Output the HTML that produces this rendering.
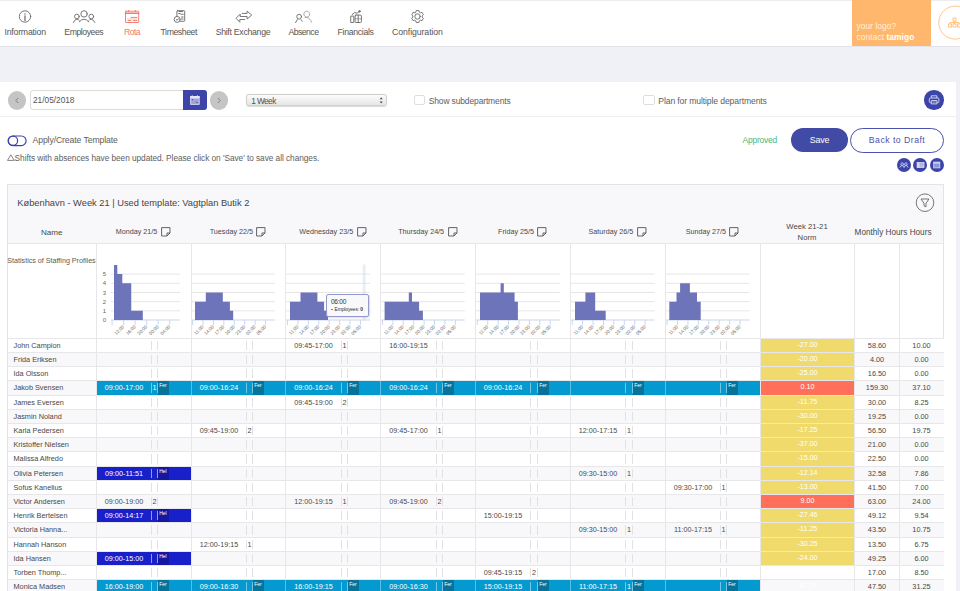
<!DOCTYPE html>
<html><head><meta charset="utf-8"><title>Rota</title>
<style>
html,body{margin:0;padding:0;}
body{width:960px;height:591px;overflow:hidden;position:relative;background:#f0f1f6;font-family:"Liberation Sans", sans-serif;}
.t{position:absolute;white-space:nowrap;font-family:"Liberation Sans", sans-serif;}
.b{position:absolute;box-sizing:border-box;}
svg{position:absolute;overflow:visible;}
</style></head><body>

<div class="b" style="left:0.00px;top:0.00px;width:960.00px;height:46.50px;background:#fff;border-top:1px solid #ececef;border-bottom:1px solid #e2e3e8;"></div>
<div class="t" style="left:-19.90px;top:27.74px;width:90px;text-align:center;font-size:8.7px;line-height:8.7px;color:#555555;letter-spacing:-0.192px;">Information</div>
<div class="t" style="left:38.77px;top:27.74px;width:90px;text-align:center;font-size:8.7px;line-height:8.7px;color:#555555;letter-spacing:-0.455px;">Employees</div>
<div class="t" style="left:87.00px;top:27.74px;width:90px;text-align:center;font-size:8.7px;line-height:8.7px;color:#f47a6a;letter-spacing:-0.592px;">Rota</div>
<div class="t" style="left:133.79px;top:27.74px;width:90px;text-align:center;font-size:8.7px;line-height:8.7px;color:#555555;letter-spacing:-0.424px;">Timesheet</div>
<div class="t" style="left:197.96px;top:27.74px;width:90px;text-align:center;font-size:8.7px;line-height:8.7px;color:#555555;letter-spacing:-0.271px;">Shift Exchange</div>
<div class="t" style="left:258.47px;top:27.74px;width:90px;text-align:center;font-size:8.7px;line-height:8.7px;color:#555555;letter-spacing:-0.560px;">Absence</div>
<div class="t" style="left:310.60px;top:27.74px;width:90px;text-align:center;font-size:8.7px;line-height:8.7px;color:#555555;letter-spacing:-0.296px;">Financials</div>
<div class="t" style="left:372.47px;top:27.74px;width:90px;text-align:center;font-size:8.7px;line-height:8.7px;color:#555555;letter-spacing:-0.063px;">Configuration</div>
<svg style="left:0;top:0" width="460" height="46" viewBox="0 0 460 46" fill="none" stroke="#707070" stroke-width="0.95" stroke-linejoin="round" stroke-linecap="round"><circle cx="25" cy="16.5" r="5.7"/><line x1="25" y1="16" x2="25" y2="20.5" stroke-width="1.3"/><circle cx="25" cy="14" r="0.75" fill="#707070" stroke="none"/><circle cx="84.07" cy="13.9" r="3.2"/><path d="M79.3 21.8 Q84 16.3 88.8 21.8"/><circle cx="76.9" cy="16.5" r="2.35"/><path d="M73.4 22.4 Q74.6 19.4 76.9 19.2 Q78.6 19.3 79.2 20.3"/><circle cx="91.3" cy="16.5" r="2.35"/><path d="M94.8 22.4 Q93.6 19.4 91.3 19.2 Q89.6 19.3 89 20.3"/><g stroke="#f47a6a"><rect x="125.5" y="11.2" width="13.2" height="11.3" rx="0.5"/><line x1="125.5" y1="13.3" x2="138.7" y2="13.3" stroke-width="1.6"/><line x1="128.6" y1="10.5" x2="128.6" y2="11.6"/><line x1="135.5" y1="10.5" x2="135.5" y2="11.6"/><line x1="131" y1="17.4" x2="137" y2="17.4"/><line x1="127.3" y1="19" x2="137" y2="19" stroke-width="0.5"/><line x1="128" y1="20.6" x2="131" y2="20.6"/><line x1="133.4" y1="20.6" x2="137" y2="20.6"/></g><rect x="176.9" y="10.7" width="7.8" height="10.6" rx="0.6"/><line x1="179" y1="11.5" x2="182.5" y2="11.5" stroke-width="1.2"/><line x1="178.6" y1="13.5" x2="180.2" y2="13.5"/><line x1="181" y1="14.3" x2="183.2" y2="14.3"/><line x1="181.4" y1="17" x2="183.2" y2="17"/><line x1="181.4" y1="19" x2="183.2" y2="19"/><circle cx="177.2" cy="19.4" r="3.0" fill="#fff"/><path d="M176.3 19.6 L177.1 20.2 L178.2 18.8"/><path d="M242.2 13.4 H247.1 V11.1 L251.7 15.1 L247.1 19 V16.5 H240.2 V14.1 L236 18.3 L239.8 22.2 V19.5 H244.7"/><circle cx="299.15" cy="16.7" r="2.4"/><path d="M295.6 22.6 L297.3 19.6 M301.2 19.8 L302.2 21.3"/><circle cx="306.8" cy="14.1" r="2.9" stroke-dasharray="0.9 1" stroke-opacity="0.7"/><path d="M305.2 17.5 Q309.8 17.2 311.8 22.5" stroke-dasharray="0.9 1" stroke-opacity="0.7"/><rect x="351.1" y="16.1" width="2.7" height="6.4"/><rect x="355.1" y="15.1" width="6.3" height="7.4" rx="0.8"/><line x1="358.2" y1="15.1" x2="358.2" y2="22.5"/><line x1="355.1" y1="18.8" x2="361.4" y2="18.8" stroke-width="0.6"/><path d="M352.2 14.6 L354.8 12.4 L357 13.3 L359.5 11.3"/><circle cx="359.5" cy="11.3" r="0.8" fill="#707070"/><path d="M415.79 12.14 L416.18 10.56 L418.92 10.56 L419.31 12.14 L420.44 12.80 L422.01 12.34 L423.38 14.72 L422.20 15.85 L422.20 17.15 L423.38 18.28 L422.01 20.66 L420.44 20.20 L419.31 20.86 L418.92 22.44 L416.18 22.44 L415.79 20.86 L414.66 20.20 L413.09 20.66 L411.72 18.28 L412.90 17.15 L412.90 15.85 L411.72 14.72 L413.09 12.34 L414.66 12.80 Z"/><circle cx="417.55" cy="16.5" r="2.7"/></svg>
<div class="b" style="left:852.00px;top:0.00px;width:79.00px;height:46.00px;background:#feb76c;"></div>
<div class="t" style="left:856.60px;top:21.99px;font-size:8.4px;line-height:8.4px;color:#fff0dc;letter-spacing:0.041px;">your logo?</div>
<div class="t" style="left:856.60px;top:32.59px;font-size:8.4px;line-height:8.4px;color:#fff0dc;letter-spacing:0.067px;">contact <b style="color:#fff">tamigo</b></div>
<svg style="left:930;top:0" width="30" height="46" viewBox="930 0 30 46" fill="none" stroke="#feb76c" stroke-width="0.8"><circle cx="955.3" cy="22.6" r="16.5"/><rect x="953" y="18" width="3" height="3"/><rect x="948.5" y="24" width="3" height="3"/><rect x="953" y="24" width="3" height="3"/><rect x="957.5" y="24" width="3" height="3"/><path d="M954.5 21 V24 M950 24 V22.5 H959 V24"/></svg>
<div class="b" style="left:0.00px;top:81.80px;width:956.00px;height:520.00px;background:#fff;"></div>
<div class="b" style="left:0.00px;top:116.20px;width:956.00px;height:1.00px;background:#ededf0;"></div>
<div class="b" style="left:7.80px;top:91.20px;width:18.40px;height:18.40px;background:#c5c5c5;border-radius:50%;"></div>
<div class="b" style="left:29.50px;top:90.20px;width:154.00px;height:19.80px;background:#fff;border:1px solid #dcdcdc;border-radius:3px 0 0 3px;"></div>
<div class="t" style="left:33.00px;top:96.47px;font-size:8.3px;line-height:8.3px;color:#555;letter-spacing:-0.005px;">21/05/2018</div>
<div class="b" style="left:183.00px;top:90.20px;width:23.50px;height:20.00px;background:#3d45a9;border-radius:0 3px 3px 0;"></div>
<svg style="left:180;top:88" width="30" height="25" viewBox="180 88 30 25"><rect x="190" y="95.9" width="9.8" height="9" rx="1" fill="#c3c6e8"/><rect x="190" y="95.9" width="9.8" height="2.2" rx="0.8" fill="#e4e5f5"/><rect x="191.2" y="99" width="7.4" height="5" fill="#9fa3d6"/><circle cx="192.4" cy="99.6" r="0.7" fill="#3d45a9"/><circle cx="197" cy="102.4" r="0.7" fill="#3d45a9"/><rect x="191.8" y="95.2" width="0.8" height="1.2" fill="#e4e5f5"/><rect x="197.2" y="95.2" width="0.8" height="1.2" fill="#e4e5f5"/></svg>
<div class="b" style="left:209.80px;top:91.20px;width:18.40px;height:18.40px;background:#c5c5c5;border-radius:50%;"></div>
<svg style="left:0;top:80" width="240" height="40" viewBox="0 80 240 40" fill="none" stroke="#777" stroke-width="0.9"><path d="M18.2 98 L15.8 100.5 L18.2 103"/><path d="M217.8 98 L220.2 100.5 L217.8 103" /></svg>
<div class="b" style="left:246.30px;top:94.30px;width:140.40px;height:12.20px;background:linear-gradient(#fbfbfb,#e6e6e6);border:0.5px solid #d0d0d0;border-radius:3px;box-shadow:0 0.5px 1px rgba(0,0,0,0.15);"></div>
<div class="t" style="left:251.30px;top:96.97px;font-size:8.3px;line-height:8.3px;color:#505050;letter-spacing:-0.598px;">1 Week</div>
<svg style="left:376;top:94" width="12" height="14" viewBox="376 94 12 14" fill="#555" stroke="none"><path d="M379.6 99.3 L381.2 97.2 L382.8 99.3 Z M379.6 101.5 L381.2 103.6 L382.8 101.5 Z"/></svg>
<div class="b" style="left:413.80px;top:94.60px;width:11.20px;height:10.80px;background:#fff;border:1px solid #dedede;border-radius:2px;"></div>
<div class="t" style="left:428.70px;top:96.70px;font-size:8.5px;line-height:8.5px;color:#5e5e5e;letter-spacing:-0.143px;">Show subdepartments</div>
<div class="b" style="left:643.40px;top:94.60px;width:11.20px;height:10.80px;background:#fff;border:1px solid #dedede;border-radius:2px;"></div>
<div class="t" style="left:658.30px;top:96.62px;font-size:8.6px;line-height:8.6px;color:#5e5e5e;letter-spacing:-0.113px;">Plan for multiple departments</div>
<div class="b" style="left:924.40px;top:90.30px;width:19.40px;height:19.40px;background:#3b44a8;border-radius:50%;"></div>
<svg style="left:920;top:86" width="30" height="28" viewBox="920 86 30 28" fill="none" stroke="#d9dbf2" stroke-width="0.95" stroke-linejoin="round"><path d="M931.3 98 V95.8 H936.9 V98"/><rect x="929.3" y="98" width="9.6" height="4.6" rx="1.2"/><rect x="931.3" y="100.6" width="5.6" height="3.3" fill="#3b44a8"/><line x1="932.5" y1="102.1" x2="935.8" y2="102.1" stroke-width="0.6"/></svg>
<svg style="left:0;top:130" width="40" height="20" viewBox="0 130 40 20" fill="none" stroke="#3d45a9" stroke-width="1.2"><rect x="8.1" y="136" width="18" height="9.6" rx="4.8"/><circle cx="13" cy="140.8" r="4.6"/></svg>
<div class="t" style="left:32.50px;top:135.54px;font-size:8.7px;line-height:8.7px;color:#5e5e5e;letter-spacing:-0.118px;">Apply/Create Template</div>
<svg style="left:0;top:150" width="20" height="14" viewBox="0 150 20 14" fill="none" stroke="#666" stroke-width="0.8" stroke-linejoin="round"><path d="M10.8 154.8 L14.3 160.4 H7.5 Z"/></svg>
<div class="t" style="left:14.60px;top:154.07px;font-size:8.3px;line-height:8.3px;color:#5e5e5e;letter-spacing:-0.052px;">Shifts with absences have been updated. Please click on 'Save' to save all changes.</div>
<div class="t" style="left:742.50px;top:135.80px;font-size:8.5px;line-height:8.5px;color:#52b478;letter-spacing:-0.241px;">Approved</div>
<div class="b" style="left:791.00px;top:128.00px;width:57.00px;height:24.00px;background:#414aa5;border-radius:12px;"></div>
<div class="t" style="left:790.99px;top:136.17px;width:57px;text-align:center;font-size:8.9px;line-height:8.9px;color:#fff;letter-spacing:-0.229px;">Save</div>
<div class="b" style="left:850.00px;top:127.70px;width:94.00px;height:25.00px;background:#fff;border:1px solid #4a52ad;border-radius:12.5px;"></div>
<div class="t" style="left:850.04px;top:136.34px;width:94px;text-align:center;font-size:8.7px;line-height:8.7px;color:#4a52ad;letter-spacing:0.476px;">Back to Draft</div>
<div class="b" style="left:897.30px;top:158.10px;width:14.00px;height:14.00px;background:#3b44a8;border-radius:50%;"></div>
<div class="b" style="left:913.30px;top:158.10px;width:14.00px;height:14.00px;background:#3b44a8;border-radius:50%;"></div>
<div class="b" style="left:930.00px;top:158.10px;width:14.00px;height:14.00px;background:#3b44a8;border-radius:50%;"></div>
<svg style="left:890;top:150" width="60" height="30" viewBox="890 150 60 30" fill="none" stroke="#d9dbf2" stroke-width="0.8"><circle cx="902.2" cy="164.1" r="1.3"/><path d="M899.9 167.6 Q900.3 165.6 902.2 165.5 Q904 165.6 904.4 167.6"/><circle cx="905.9" cy="164.1" r="1.3"/><path d="M903.7 167.6 Q904.1 165.6 905.9 165.5 Q907.7 165.6 908.1 167.6"/><rect x="917.1" y="162.4" width="6.9" height="5.2" fill="#9ea3d8"/><rect x="917.1" y="162.4" width="2.5" height="5.2" fill="#d9dbf2" stroke="none"/><line x1="919.8" y1="163.9" x2="924" y2="163.9" stroke-width="0.5"/><line x1="919.8" y1="165.4" x2="924" y2="165.4" stroke-width="0.5"/><line x1="919.8" y1="166.7" x2="924" y2="166.7" stroke-width="0.5"/><rect x="933.7" y="162.1" width="6.1" height="5.8" fill="#8f95d2"/><line x1="933.7" y1="162.9" x2="939.8" y2="162.9" stroke-width="1.3"/></svg>
<div class="b" style="left:7.00px;top:184.20px;width:936.80px;height:420.00px;background:#fff;border:1px solid #e4e4e8;"></div>
<div class="b" style="left:8.00px;top:185.20px;width:934.80px;height:57.80px;background:#f8f8fb;"></div>
<div class="b" style="left:8.00px;top:242.80px;width:934.80px;height:1.00px;background:#e6e6ea;"></div>
<div class="t" style="left:17.30px;top:198.63px;font-size:9.3px;line-height:9.3px;color:#444;">København - Week 21 | Used template: Vagtplan Butik 2</div>
<svg style="left:910;top:188" width="30" height="30" viewBox="910 188 30 30" fill="none" stroke="#666" stroke-width="0.9"><circle cx="925" cy="202.7" r="8.8"/><path d="M921 199 H929 L926 203.3 V206.8 L924 205.8 V203.3 Z"/></svg>
<div class="t" style="left:11.70px;top:228.54px;width:80px;text-align:center;font-size:8.1px;line-height:8.1px;color:#484848;">Name</div>
<div class="t" style="left:76.20px;top:228.21px;width:133.50px;height:10px;display:flex;justify-content:center;align-items:flex-start;font-size:7.2px;line-height:7.2px;color:#484848"><span>Monday 21/5</span><svg style="position:relative;margin-left:3.4px;top:-1.6px" width="9.6" height="9.6" viewBox="0 0 9.6 9.6" fill="none" stroke="#555" stroke-width="0.9"><path d="M0.6 0.6 H9 V6 L6 9 H0.6 Z M9 6 H6 V9"/></svg></div>
<div class="t" style="left:171.10px;top:228.21px;width:133.50px;height:10px;display:flex;justify-content:center;align-items:flex-start;font-size:7.2px;line-height:7.2px;color:#484848"><span>Tuesday 22/5</span><svg style="position:relative;margin-left:3.4px;top:-1.6px" width="9.6" height="9.6" viewBox="0 0 9.6 9.6" fill="none" stroke="#555" stroke-width="0.9"><path d="M0.6 0.6 H9 V6 L6 9 H0.6 Z M9 6 H6 V9"/></svg></div>
<div class="t" style="left:266.00px;top:228.21px;width:133.50px;height:10px;display:flex;justify-content:center;align-items:flex-start;font-size:7.2px;line-height:7.2px;color:#484848"><span>Wednesday 23/5</span><svg style="position:relative;margin-left:3.4px;top:-1.6px" width="9.6" height="9.6" viewBox="0 0 9.6 9.6" fill="none" stroke="#555" stroke-width="0.9"><path d="M0.6 0.6 H9 V6 L6 9 H0.6 Z M9 6 H6 V9"/></svg></div>
<div class="t" style="left:360.90px;top:228.21px;width:133.50px;height:10px;display:flex;justify-content:center;align-items:flex-start;font-size:7.2px;line-height:7.2px;color:#484848"><span>Thursday 24/5</span><svg style="position:relative;margin-left:3.4px;top:-1.6px" width="9.6" height="9.6" viewBox="0 0 9.6 9.6" fill="none" stroke="#555" stroke-width="0.9"><path d="M0.6 0.6 H9 V6 L6 9 H0.6 Z M9 6 H6 V9"/></svg></div>
<div class="t" style="left:455.80px;top:228.21px;width:133.50px;height:10px;display:flex;justify-content:center;align-items:flex-start;font-size:7.2px;line-height:7.2px;color:#484848"><span>Friday 25/5</span><svg style="position:relative;margin-left:3.4px;top:-1.6px" width="9.6" height="9.6" viewBox="0 0 9.6 9.6" fill="none" stroke="#555" stroke-width="0.9"><path d="M0.6 0.6 H9 V6 L6 9 H0.6 Z M9 6 H6 V9"/></svg></div>
<div class="t" style="left:550.70px;top:228.21px;width:133.50px;height:10px;display:flex;justify-content:center;align-items:flex-start;font-size:7.2px;line-height:7.2px;color:#484848"><span>Saturday 26/5</span><svg style="position:relative;margin-left:3.4px;top:-1.6px" width="9.6" height="9.6" viewBox="0 0 9.6 9.6" fill="none" stroke="#555" stroke-width="0.9"><path d="M0.6 0.6 H9 V6 L6 9 H0.6 Z M9 6 H6 V9"/></svg></div>
<div class="t" style="left:645.60px;top:228.21px;width:133.50px;height:10px;display:flex;justify-content:center;align-items:flex-start;font-size:7.2px;line-height:7.2px;color:#484848"><span>Sunday 27/5</span><svg style="position:relative;margin-left:3.4px;top:-1.6px" width="9.6" height="9.6" viewBox="0 0 9.6 9.6" fill="none" stroke="#555" stroke-width="0.9"><path d="M0.6 0.6 H9 V6 L6 9 H0.6 Z M9 6 H6 V9"/></svg></div>
<div class="t" style="left:767.00px;top:222.68px;width:80px;text-align:center;font-size:7.7px;line-height:7.7px;color:#484848;">Week 21-21</div>
<div class="t" style="left:767.00px;top:234.18px;width:80px;text-align:center;font-size:7.7px;line-height:7.7px;color:#484848;">Norm</div>
<div class="t" style="left:854.60px;top:228.56px;font-size:8.2px;line-height:8.2px;color:#484848;">Monthly Hours Hours</div>
<div class="b" style="left:8.00px;top:338.00px;width:935.80px;height:14.00px;background:#fff;border-top:1px solid #e7e7ea;"></div>
<div class="b" style="left:8.00px;top:352.00px;width:935.80px;height:14.00px;background:#f8f8fa;border-top:1px solid #e7e7ea;"></div>
<div class="b" style="left:8.00px;top:366.00px;width:935.80px;height:14.00px;background:#fff;border-top:1px solid #e7e7ea;"></div>
<div class="b" style="left:8.00px;top:380.00px;width:935.80px;height:15.00px;background:#f8f8fa;border-top:1px solid #e7e7ea;"></div>
<div class="b" style="left:8.00px;top:395.00px;width:935.80px;height:14.00px;background:#fff;border-top:1px solid #e7e7ea;"></div>
<div class="b" style="left:8.00px;top:409.00px;width:935.80px;height:14.00px;background:#f8f8fa;border-top:1px solid #e7e7ea;"></div>
<div class="b" style="left:8.00px;top:423.00px;width:935.80px;height:14.00px;background:#fff;border-top:1px solid #e7e7ea;"></div>
<div class="b" style="left:8.00px;top:437.00px;width:935.80px;height:14.00px;background:#f8f8fa;border-top:1px solid #e7e7ea;"></div>
<div class="b" style="left:8.00px;top:451.00px;width:935.80px;height:15.00px;background:#fff;border-top:1px solid #e7e7ea;"></div>
<div class="b" style="left:8.00px;top:466.00px;width:935.80px;height:14.00px;background:#f8f8fa;border-top:1px solid #e7e7ea;"></div>
<div class="b" style="left:8.00px;top:480.00px;width:935.80px;height:14.00px;background:#fff;border-top:1px solid #e7e7ea;"></div>
<div class="b" style="left:8.00px;top:494.00px;width:935.80px;height:14.00px;background:#f8f8fa;border-top:1px solid #e7e7ea;"></div>
<div class="b" style="left:8.00px;top:508.00px;width:935.80px;height:14.00px;background:#fff;border-top:1px solid #e7e7ea;"></div>
<div class="b" style="left:8.00px;top:522.00px;width:935.80px;height:15.00px;background:#f8f8fa;border-top:1px solid #e7e7ea;"></div>
<div class="b" style="left:8.00px;top:537.00px;width:935.80px;height:14.00px;background:#fff;border-top:1px solid #e7e7ea;"></div>
<div class="b" style="left:8.00px;top:551.00px;width:935.80px;height:14.00px;background:#f8f8fa;border-top:1px solid #e7e7ea;"></div>
<div class="b" style="left:8.00px;top:565.00px;width:935.80px;height:14.00px;background:#fff;border-top:1px solid #e7e7ea;"></div>
<div class="b" style="left:8.00px;top:579.00px;width:935.80px;height:14.00px;background:#f8f8fa;border-top:1px solid #e7e7ea;"></div>
<div class="b" style="left:96.00px;top:243.00px;width:1.00px;height:348.00px;background:#e7e7ea;"></div>
<div class="b" style="left:191.00px;top:243.00px;width:1.00px;height:348.00px;background:#e7e7ea;"></div>
<div class="b" style="left:285.00px;top:243.00px;width:1.00px;height:348.00px;background:#e7e7ea;"></div>
<div class="b" style="left:380.00px;top:243.00px;width:1.00px;height:348.00px;background:#e7e7ea;"></div>
<div class="b" style="left:475.00px;top:243.00px;width:1.00px;height:348.00px;background:#e7e7ea;"></div>
<div class="b" style="left:570.00px;top:243.00px;width:1.00px;height:348.00px;background:#e7e7ea;"></div>
<div class="b" style="left:665.00px;top:243.00px;width:1.00px;height:348.00px;background:#e7e7ea;"></div>
<div class="b" style="left:760.00px;top:243.00px;width:1.00px;height:348.00px;background:#e7e7ea;"></div>
<div class="b" style="left:854.00px;top:243.00px;width:1.00px;height:348.00px;background:#e7e7ea;"></div>
<div class="b" style="left:899.00px;top:243.00px;width:1.00px;height:348.00px;background:#e7e7ea;"></div>
<div class="t" style="left:7.30px;top:257.75px;font-size:7.15px;line-height:7.15px;color:#5a5a5a;">Statistics of Staffing Profiles</div>
<svg style="left:0;top:240" width="960" height="100" viewBox="0 240 960 100"><rect x="111" y="310.32" width="69" height="1" fill="#e6e6e6"/><rect x="111" y="301.14" width="69" height="1" fill="#e6e6e6"/><rect x="111" y="291.96" width="69" height="1" fill="#e6e6e6"/><rect x="111" y="282.78" width="69" height="1" fill="#e6e6e6"/><rect x="111" y="273.60" width="69" height="1" fill="#e6e6e6"/><rect x="111" y="319.50" width="69" height="1" fill="#ccd6eb"/><text x="106" y="322.20" font-size="6" fill="#666" text-anchor="end" font-family="Liberation Sans">0</text><text x="106" y="313.02" font-size="6" fill="#666" text-anchor="end" font-family="Liberation Sans">1</text><text x="106" y="303.84" font-size="6" fill="#666" text-anchor="end" font-family="Liberation Sans">2</text><text x="106" y="294.66" font-size="6" fill="#666" text-anchor="end" font-family="Liberation Sans">3</text><text x="106" y="285.48" font-size="6" fill="#666" text-anchor="end" font-family="Liberation Sans">4</text><text x="106" y="276.30" font-size="6" fill="#666" text-anchor="end" font-family="Liberation Sans">5</text><path d="M114.00 320.00 L114.00 264.92 L117.30 264.92 L117.30 274.10 L122.30 274.10 L122.30 283.28 L131.25 283.28 L131.25 310.82 L142.80 310.82 L142.80 320.00 Z" fill="#6e74b9"/><rect x="111.60" y="320.00" width="1" height="5" fill="#ccd6eb"/><rect x="123.12" y="320.00" width="1" height="5" fill="#ccd6eb"/><rect x="134.64" y="320.00" width="1" height="5" fill="#ccd6eb"/><rect x="146.16" y="320.00" width="1" height="5" fill="#ccd6eb"/><rect x="157.68" y="320.00" width="1" height="5" fill="#ccd6eb"/><rect x="169.20" y="320.00" width="1" height="5" fill="#ccd6eb"/><text transform="translate(124.42,327.20) rotate(-45)" font-size="4.6" fill="#666" text-anchor="end" font-family="Liberation Sans">12:00</text><text transform="translate(135.94,327.20) rotate(-45)" font-size="4.6" fill="#666" text-anchor="end" font-family="Liberation Sans">16:00</text><text transform="translate(147.46,327.20) rotate(-45)" font-size="4.6" fill="#666" text-anchor="end" font-family="Liberation Sans">20:00</text><text transform="translate(158.98,327.20) rotate(-45)" font-size="4.6" fill="#666" text-anchor="end" font-family="Liberation Sans">00:00</text><text transform="translate(170.50,327.20) rotate(-45)" font-size="4.6" fill="#666" text-anchor="end" font-family="Liberation Sans">04:00</text><rect x="191.50" y="310.32" width="83.5" height="1" fill="#e6e6e6"/><rect x="191.50" y="301.14" width="83.5" height="1" fill="#e6e6e6"/><rect x="191.50" y="291.96" width="83.5" height="1" fill="#e6e6e6"/><rect x="191.50" y="282.78" width="83.5" height="1" fill="#e6e6e6"/><rect x="191.50" y="273.60" width="83.5" height="1" fill="#e6e6e6"/><rect x="191.50" y="319.50" width="83.5" height="1" fill="#ccd6eb"/><path d="M195.00 320.00 L195.00 301.64 L205.80 301.64 L205.80 292.46 L222.80 292.46 L222.80 301.64 L229.90 301.64 L229.90 310.82 L233.20 310.82 L233.20 320.00 Z" fill="#6e74b9"/><rect x="192.10" y="320.00" width="1" height="5" fill="#ccd6eb"/><rect x="202.52" y="320.00" width="1" height="5" fill="#ccd6eb"/><rect x="212.94" y="320.00" width="1" height="5" fill="#ccd6eb"/><rect x="223.36" y="320.00" width="1" height="5" fill="#ccd6eb"/><rect x="233.78" y="320.00" width="1" height="5" fill="#ccd6eb"/><rect x="244.20" y="320.00" width="1" height="5" fill="#ccd6eb"/><rect x="254.62" y="320.00" width="1" height="5" fill="#ccd6eb"/><rect x="265.04" y="320.00" width="1" height="5" fill="#ccd6eb"/><text transform="translate(203.82,327.20) rotate(-45)" font-size="4.6" fill="#666" text-anchor="end" font-family="Liberation Sans">11:00</text><text transform="translate(214.24,327.20) rotate(-45)" font-size="4.6" fill="#666" text-anchor="end" font-family="Liberation Sans">14:00</text><text transform="translate(224.66,327.20) rotate(-45)" font-size="4.6" fill="#666" text-anchor="end" font-family="Liberation Sans">17:00</text><text transform="translate(235.08,327.20) rotate(-45)" font-size="4.6" fill="#666" text-anchor="end" font-family="Liberation Sans">20:00</text><text transform="translate(245.50,327.20) rotate(-45)" font-size="4.6" fill="#666" text-anchor="end" font-family="Liberation Sans">23:00</text><text transform="translate(255.92,327.20) rotate(-45)" font-size="4.6" fill="#666" text-anchor="end" font-family="Liberation Sans">02:00</text><text transform="translate(266.34,327.20) rotate(-45)" font-size="4.6" fill="#666" text-anchor="end" font-family="Liberation Sans">05:00</text><rect x="286.40" y="310.32" width="83.5" height="1" fill="#e6e6e6"/><rect x="286.40" y="301.14" width="83.5" height="1" fill="#e6e6e6"/><rect x="286.40" y="291.96" width="83.5" height="1" fill="#e6e6e6"/><rect x="286.40" y="282.78" width="83.5" height="1" fill="#e6e6e6"/><rect x="286.40" y="273.60" width="83.5" height="1" fill="#e6e6e6"/><rect x="286.40" y="319.50" width="83.5" height="1" fill="#ccd6eb"/><path d="M290.00 320.00 L290.00 301.64 L300.50 301.64 L300.50 292.46 L317.40 292.46 L317.40 301.64 L324.10 301.64 L324.10 310.82 L328.00 310.82 L328.00 320.00 Z" fill="#6e74b9"/><rect x="287.00" y="320.00" width="1" height="5" fill="#ccd6eb"/><rect x="297.42" y="320.00" width="1" height="5" fill="#ccd6eb"/><rect x="307.84" y="320.00" width="1" height="5" fill="#ccd6eb"/><rect x="318.26" y="320.00" width="1" height="5" fill="#ccd6eb"/><rect x="328.68" y="320.00" width="1" height="5" fill="#ccd6eb"/><rect x="339.10" y="320.00" width="1" height="5" fill="#ccd6eb"/><rect x="349.52" y="320.00" width="1" height="5" fill="#ccd6eb"/><rect x="359.94" y="320.00" width="1" height="5" fill="#ccd6eb"/><text transform="translate(298.72,327.20) rotate(-45)" font-size="4.6" fill="#666" text-anchor="end" font-family="Liberation Sans">11:00</text><text transform="translate(309.14,327.20) rotate(-45)" font-size="4.6" fill="#666" text-anchor="end" font-family="Liberation Sans">14:00</text><text transform="translate(319.56,327.20) rotate(-45)" font-size="4.6" fill="#666" text-anchor="end" font-family="Liberation Sans">17:00</text><text transform="translate(329.98,327.20) rotate(-45)" font-size="4.6" fill="#666" text-anchor="end" font-family="Liberation Sans">20:00</text><text transform="translate(340.40,327.20) rotate(-45)" font-size="4.6" fill="#666" text-anchor="end" font-family="Liberation Sans">23:00</text><text transform="translate(350.82,327.20) rotate(-45)" font-size="4.6" fill="#666" text-anchor="end" font-family="Liberation Sans">02:00</text><text transform="translate(361.24,327.20) rotate(-45)" font-size="4.6" fill="#666" text-anchor="end" font-family="Liberation Sans">05:00</text><rect x="381.30" y="310.32" width="83.5" height="1" fill="#e6e6e6"/><rect x="381.30" y="301.14" width="83.5" height="1" fill="#e6e6e6"/><rect x="381.30" y="291.96" width="83.5" height="1" fill="#e6e6e6"/><rect x="381.30" y="282.78" width="83.5" height="1" fill="#e6e6e6"/><rect x="381.30" y="273.60" width="83.5" height="1" fill="#e6e6e6"/><rect x="381.30" y="319.50" width="83.5" height="1" fill="#ccd6eb"/><path d="M384.60 320.00 L384.60 301.64 L408.80 301.64 L408.80 292.46 L412.00 292.46 L412.00 301.64 L419.10 301.64 L419.10 310.82 L422.90 310.82 L422.90 320.00 Z" fill="#6e74b9"/><rect x="381.90" y="320.00" width="1" height="5" fill="#ccd6eb"/><rect x="392.32" y="320.00" width="1" height="5" fill="#ccd6eb"/><rect x="402.74" y="320.00" width="1" height="5" fill="#ccd6eb"/><rect x="413.16" y="320.00" width="1" height="5" fill="#ccd6eb"/><rect x="423.58" y="320.00" width="1" height="5" fill="#ccd6eb"/><rect x="434.00" y="320.00" width="1" height="5" fill="#ccd6eb"/><rect x="444.42" y="320.00" width="1" height="5" fill="#ccd6eb"/><rect x="454.84" y="320.00" width="1" height="5" fill="#ccd6eb"/><text transform="translate(393.62,327.20) rotate(-45)" font-size="4.6" fill="#666" text-anchor="end" font-family="Liberation Sans">11:00</text><text transform="translate(404.04,327.20) rotate(-45)" font-size="4.6" fill="#666" text-anchor="end" font-family="Liberation Sans">14:00</text><text transform="translate(414.46,327.20) rotate(-45)" font-size="4.6" fill="#666" text-anchor="end" font-family="Liberation Sans">17:00</text><text transform="translate(424.88,327.20) rotate(-45)" font-size="4.6" fill="#666" text-anchor="end" font-family="Liberation Sans">20:00</text><text transform="translate(435.30,327.20) rotate(-45)" font-size="4.6" fill="#666" text-anchor="end" font-family="Liberation Sans">23:00</text><text transform="translate(445.72,327.20) rotate(-45)" font-size="4.6" fill="#666" text-anchor="end" font-family="Liberation Sans">02:00</text><text transform="translate(456.14,327.20) rotate(-45)" font-size="4.6" fill="#666" text-anchor="end" font-family="Liberation Sans">05:00</text><rect x="476.20" y="310.32" width="83.5" height="1" fill="#e6e6e6"/><rect x="476.20" y="301.14" width="83.5" height="1" fill="#e6e6e6"/><rect x="476.20" y="291.96" width="83.5" height="1" fill="#e6e6e6"/><rect x="476.20" y="282.78" width="83.5" height="1" fill="#e6e6e6"/><rect x="476.20" y="273.60" width="83.5" height="1" fill="#e6e6e6"/><rect x="476.20" y="319.50" width="83.5" height="1" fill="#ccd6eb"/><path d="M480.00 320.00 L480.00 292.46 L500.60 292.46 L500.60 283.28 L503.80 283.28 L503.80 292.46 L514.60 292.46 L514.60 301.64 L517.90 301.64 L517.90 320.00 Z" fill="#6e74b9"/><rect x="476.80" y="320.00" width="1" height="5" fill="#ccd6eb"/><rect x="487.22" y="320.00" width="1" height="5" fill="#ccd6eb"/><rect x="497.64" y="320.00" width="1" height="5" fill="#ccd6eb"/><rect x="508.06" y="320.00" width="1" height="5" fill="#ccd6eb"/><rect x="518.48" y="320.00" width="1" height="5" fill="#ccd6eb"/><rect x="528.90" y="320.00" width="1" height="5" fill="#ccd6eb"/><rect x="539.32" y="320.00" width="1" height="5" fill="#ccd6eb"/><rect x="549.74" y="320.00" width="1" height="5" fill="#ccd6eb"/><text transform="translate(488.52,327.20) rotate(-45)" font-size="4.6" fill="#666" text-anchor="end" font-family="Liberation Sans">11:00</text><text transform="translate(498.94,327.20) rotate(-45)" font-size="4.6" fill="#666" text-anchor="end" font-family="Liberation Sans">14:00</text><text transform="translate(509.36,327.20) rotate(-45)" font-size="4.6" fill="#666" text-anchor="end" font-family="Liberation Sans">17:00</text><text transform="translate(519.78,327.20) rotate(-45)" font-size="4.6" fill="#666" text-anchor="end" font-family="Liberation Sans">20:00</text><text transform="translate(530.20,327.20) rotate(-45)" font-size="4.6" fill="#666" text-anchor="end" font-family="Liberation Sans">23:00</text><text transform="translate(540.62,327.20) rotate(-45)" font-size="4.6" fill="#666" text-anchor="end" font-family="Liberation Sans">02:00</text><text transform="translate(551.04,327.20) rotate(-45)" font-size="4.6" fill="#666" text-anchor="end" font-family="Liberation Sans">05:00</text><rect x="571.10" y="310.32" width="83.5" height="1" fill="#e6e6e6"/><rect x="571.10" y="301.14" width="83.5" height="1" fill="#e6e6e6"/><rect x="571.10" y="291.96" width="83.5" height="1" fill="#e6e6e6"/><rect x="571.10" y="282.78" width="83.5" height="1" fill="#e6e6e6"/><rect x="571.10" y="273.60" width="83.5" height="1" fill="#e6e6e6"/><rect x="571.10" y="319.50" width="83.5" height="1" fill="#ccd6eb"/><path d="M575.00 320.00 L575.00 301.64 L585.40 301.64 L585.40 292.46 L595.20 292.46 L595.20 310.82 L605.70 310.82 L605.70 320.00 Z" fill="#6e74b9"/><rect x="571.70" y="320.00" width="1" height="5" fill="#ccd6eb"/><rect x="582.12" y="320.00" width="1" height="5" fill="#ccd6eb"/><rect x="592.54" y="320.00" width="1" height="5" fill="#ccd6eb"/><rect x="602.96" y="320.00" width="1" height="5" fill="#ccd6eb"/><rect x="613.38" y="320.00" width="1" height="5" fill="#ccd6eb"/><rect x="623.80" y="320.00" width="1" height="5" fill="#ccd6eb"/><rect x="634.22" y="320.00" width="1" height="5" fill="#ccd6eb"/><rect x="644.64" y="320.00" width="1" height="5" fill="#ccd6eb"/><text transform="translate(583.42,327.20) rotate(-45)" font-size="4.6" fill="#666" text-anchor="end" font-family="Liberation Sans">11:00</text><text transform="translate(593.84,327.20) rotate(-45)" font-size="4.6" fill="#666" text-anchor="end" font-family="Liberation Sans">14:00</text><text transform="translate(604.26,327.20) rotate(-45)" font-size="4.6" fill="#666" text-anchor="end" font-family="Liberation Sans">17:00</text><text transform="translate(614.68,327.20) rotate(-45)" font-size="4.6" fill="#666" text-anchor="end" font-family="Liberation Sans">20:00</text><text transform="translate(625.10,327.20) rotate(-45)" font-size="4.6" fill="#666" text-anchor="end" font-family="Liberation Sans">23:00</text><text transform="translate(635.52,327.20) rotate(-45)" font-size="4.6" fill="#666" text-anchor="end" font-family="Liberation Sans">02:00</text><text transform="translate(645.94,327.20) rotate(-45)" font-size="4.6" fill="#666" text-anchor="end" font-family="Liberation Sans">05:00</text><rect x="666.00" y="310.32" width="83.5" height="1" fill="#e6e6e6"/><rect x="666.00" y="301.14" width="83.5" height="1" fill="#e6e6e6"/><rect x="666.00" y="291.96" width="83.5" height="1" fill="#e6e6e6"/><rect x="666.00" y="282.78" width="83.5" height="1" fill="#e6e6e6"/><rect x="666.00" y="273.60" width="83.5" height="1" fill="#e6e6e6"/><rect x="666.00" y="319.50" width="83.5" height="1" fill="#ccd6eb"/><path d="M669.30 320.00 L669.30 301.64 L676.50 301.64 L676.50 292.46 L680.10 292.46 L680.10 283.28 L689.90 283.28 L689.90 292.46 L697.00 292.46 L697.00 301.64 L700.70 301.64 L700.70 320.00 Z" fill="#6e74b9"/><rect x="666.60" y="320.00" width="1" height="5" fill="#ccd6eb"/><rect x="677.02" y="320.00" width="1" height="5" fill="#ccd6eb"/><rect x="687.44" y="320.00" width="1" height="5" fill="#ccd6eb"/><rect x="697.86" y="320.00" width="1" height="5" fill="#ccd6eb"/><rect x="708.28" y="320.00" width="1" height="5" fill="#ccd6eb"/><rect x="718.70" y="320.00" width="1" height="5" fill="#ccd6eb"/><rect x="729.12" y="320.00" width="1" height="5" fill="#ccd6eb"/><rect x="739.54" y="320.00" width="1" height="5" fill="#ccd6eb"/><text transform="translate(678.32,327.20) rotate(-45)" font-size="4.6" fill="#666" text-anchor="end" font-family="Liberation Sans">11:00</text><text transform="translate(688.74,327.20) rotate(-45)" font-size="4.6" fill="#666" text-anchor="end" font-family="Liberation Sans">14:00</text><text transform="translate(699.16,327.20) rotate(-45)" font-size="4.6" fill="#666" text-anchor="end" font-family="Liberation Sans">17:00</text><text transform="translate(709.58,327.20) rotate(-45)" font-size="4.6" fill="#666" text-anchor="end" font-family="Liberation Sans">20:00</text><text transform="translate(720.00,327.20) rotate(-45)" font-size="4.6" fill="#666" text-anchor="end" font-family="Liberation Sans">23:00</text><text transform="translate(730.42,327.20) rotate(-45)" font-size="4.6" fill="#666" text-anchor="end" font-family="Liberation Sans">02:00</text><text transform="translate(740.84,327.20) rotate(-45)" font-size="4.6" fill="#666" text-anchor="end" font-family="Liberation Sans">05:00</text><rect x="362.7" y="264.4" width="2.9" height="55.60" fill="rgba(204,214,235,0.45)"/></svg>
<div class="b" style="left:326.40px;top:294.10px;width:42.30px;height:23.10px;background:rgba(249,249,251,0.94);border:1px solid #9599d0;border-radius:2px;box-shadow:1px 1px 1.5px rgba(0,0,0,0.13);"></div>
<div class="t" style="left:330.90px;top:299.11px;font-size:6.6px;line-height:6.6px;color:#333;letter-spacing:-0.254px;">06:00</div>
<div class="b" style="left:330.90px;top:308.60px;width:1.80px;height:1.80px;background:#6c71b7;border-radius:50%;"></div>
<div class="t" style="left:334.60px;top:307.75px;font-size:4.9px;line-height:4.9px;color:#333;letter-spacing:-0.108px;">Employees: <b>0</b></div>
<div class="b" style="left:761.00px;top:339.00px;width:93.00px;height:13.00px;background:#f0da6c;"></div>
<div class="t" style="left:767.50px;top:341.99px;width:80px;text-align:center;font-size:7.1px;line-height:7.1px;color:#fff;">-27.00</div>
<div class="t" style="left:847.00px;top:341.82px;width:60px;text-align:center;font-size:7.3px;line-height:7.3px;color:#484848;">58.60</div>
<div class="t" style="left:891.50px;top:341.82px;width:60px;text-align:center;font-size:7.3px;line-height:7.3px;color:#484848;">10.00</div>
<div class="t" style="left:13.50px;top:341.82px;font-size:7.3px;line-height:7.3px;color:#484848;">John Campion</div>
<div class="b" style="left:151.00px;top:341.00px;width:1.00px;height:9.00px;background:#e2e2e4;"></div>
<div class="b" style="left:157.00px;top:341.00px;width:1.00px;height:9.00px;background:#e2e2e4;"></div>
<div class="b" style="left:246.00px;top:341.00px;width:1.00px;height:9.00px;background:#e2e2e4;"></div>
<div class="b" style="left:252.00px;top:341.00px;width:1.00px;height:9.00px;background:#e2e2e4;"></div>
<div class="b" style="left:341.00px;top:341.00px;width:1.00px;height:9.00px;background:#e2e2e4;"></div>
<div class="b" style="left:347.00px;top:341.00px;width:1.00px;height:9.00px;background:#e2e2e4;"></div>
<div class="t" style="left:283.50px;top:341.91px;width:60px;text-align:center;font-size:7.2px;line-height:7.2px;color:#484848;">09:45-17:00</div>
<div class="t" style="left:339.50px;top:341.91px;width:10px;text-align:center;font-size:7.2px;line-height:7.2px;color:#484848;">1</div>
<div class="b" style="left:436.00px;top:341.00px;width:1.00px;height:9.00px;background:#e2e2e4;"></div>
<div class="b" style="left:442.00px;top:341.00px;width:1.00px;height:9.00px;background:#e2e2e4;"></div>
<div class="t" style="left:378.50px;top:341.91px;width:60px;text-align:center;font-size:7.2px;line-height:7.2px;color:#484848;">16:00-19:15</div>
<div class="b" style="left:530.00px;top:341.00px;width:1.00px;height:9.00px;background:#e2e2e4;"></div>
<div class="b" style="left:537.00px;top:341.00px;width:1.00px;height:9.00px;background:#e2e2e4;"></div>
<div class="b" style="left:625.00px;top:341.00px;width:1.00px;height:9.00px;background:#e2e2e4;"></div>
<div class="b" style="left:632.00px;top:341.00px;width:1.00px;height:9.00px;background:#e2e2e4;"></div>
<div class="b" style="left:720.00px;top:341.00px;width:1.00px;height:9.00px;background:#e2e2e4;"></div>
<div class="b" style="left:726.00px;top:341.00px;width:1.00px;height:9.00px;background:#e2e2e4;"></div>
<div class="b" style="left:761.00px;top:353.00px;width:93.00px;height:13.00px;background:#f0da6c;"></div>
<div class="t" style="left:767.50px;top:355.99px;width:80px;text-align:center;font-size:7.1px;line-height:7.1px;color:#fff;">-20.00</div>
<div class="t" style="left:847.00px;top:355.82px;width:60px;text-align:center;font-size:7.3px;line-height:7.3px;color:#484848;">4.00</div>
<div class="t" style="left:891.50px;top:355.82px;width:60px;text-align:center;font-size:7.3px;line-height:7.3px;color:#484848;">0.00</div>
<div class="t" style="left:13.50px;top:355.82px;font-size:7.3px;line-height:7.3px;color:#484848;">Frida Eriksen</div>
<div class="b" style="left:151.00px;top:355.00px;width:1.00px;height:9.00px;background:#e2e2e4;"></div>
<div class="b" style="left:157.00px;top:355.00px;width:1.00px;height:9.00px;background:#e2e2e4;"></div>
<div class="b" style="left:246.00px;top:355.00px;width:1.00px;height:9.00px;background:#e2e2e4;"></div>
<div class="b" style="left:252.00px;top:355.00px;width:1.00px;height:9.00px;background:#e2e2e4;"></div>
<div class="b" style="left:341.00px;top:355.00px;width:1.00px;height:9.00px;background:#e2e2e4;"></div>
<div class="b" style="left:347.00px;top:355.00px;width:1.00px;height:9.00px;background:#e2e2e4;"></div>
<div class="b" style="left:436.00px;top:355.00px;width:1.00px;height:9.00px;background:#e2e2e4;"></div>
<div class="b" style="left:442.00px;top:355.00px;width:1.00px;height:9.00px;background:#e2e2e4;"></div>
<div class="b" style="left:530.00px;top:355.00px;width:1.00px;height:9.00px;background:#e2e2e4;"></div>
<div class="b" style="left:537.00px;top:355.00px;width:1.00px;height:9.00px;background:#e2e2e4;"></div>
<div class="b" style="left:625.00px;top:355.00px;width:1.00px;height:9.00px;background:#e2e2e4;"></div>
<div class="b" style="left:632.00px;top:355.00px;width:1.00px;height:9.00px;background:#e2e2e4;"></div>
<div class="b" style="left:720.00px;top:355.00px;width:1.00px;height:9.00px;background:#e2e2e4;"></div>
<div class="b" style="left:726.00px;top:355.00px;width:1.00px;height:9.00px;background:#e2e2e4;"></div>
<div class="b" style="left:761.00px;top:367.00px;width:93.00px;height:13.00px;background:#f0da6c;"></div>
<div class="t" style="left:767.50px;top:369.99px;width:80px;text-align:center;font-size:7.1px;line-height:7.1px;color:#fff;">-25.00</div>
<div class="t" style="left:847.00px;top:369.82px;width:60px;text-align:center;font-size:7.3px;line-height:7.3px;color:#484848;">16.50</div>
<div class="t" style="left:891.50px;top:369.82px;width:60px;text-align:center;font-size:7.3px;line-height:7.3px;color:#484848;">0.00</div>
<div class="t" style="left:13.50px;top:369.82px;font-size:7.3px;line-height:7.3px;color:#484848;">Ida Olsson</div>
<div class="b" style="left:151.00px;top:369.00px;width:1.00px;height:9.00px;background:#e2e2e4;"></div>
<div class="b" style="left:157.00px;top:369.00px;width:1.00px;height:9.00px;background:#e2e2e4;"></div>
<div class="b" style="left:246.00px;top:369.00px;width:1.00px;height:9.00px;background:#e2e2e4;"></div>
<div class="b" style="left:252.00px;top:369.00px;width:1.00px;height:9.00px;background:#e2e2e4;"></div>
<div class="b" style="left:341.00px;top:369.00px;width:1.00px;height:9.00px;background:#e2e2e4;"></div>
<div class="b" style="left:347.00px;top:369.00px;width:1.00px;height:9.00px;background:#e2e2e4;"></div>
<div class="b" style="left:436.00px;top:369.00px;width:1.00px;height:9.00px;background:#e2e2e4;"></div>
<div class="b" style="left:442.00px;top:369.00px;width:1.00px;height:9.00px;background:#e2e2e4;"></div>
<div class="b" style="left:530.00px;top:369.00px;width:1.00px;height:9.00px;background:#e2e2e4;"></div>
<div class="b" style="left:537.00px;top:369.00px;width:1.00px;height:9.00px;background:#e2e2e4;"></div>
<div class="b" style="left:625.00px;top:369.00px;width:1.00px;height:9.00px;background:#e2e2e4;"></div>
<div class="b" style="left:632.00px;top:369.00px;width:1.00px;height:9.00px;background:#e2e2e4;"></div>
<div class="b" style="left:720.00px;top:369.00px;width:1.00px;height:9.00px;background:#e2e2e4;"></div>
<div class="b" style="left:726.00px;top:369.00px;width:1.00px;height:9.00px;background:#e2e2e4;"></div>
<div class="b" style="left:97.00px;top:381.00px;width:663.00px;height:14.00px;background:#049acf;"></div>
<div class="b" style="left:761.00px;top:381.00px;width:93.00px;height:14.00px;background:#ff6f59;"></div>
<div class="t" style="left:767.50px;top:383.99px;width:80px;text-align:center;font-size:7.1px;line-height:7.1px;color:#fff;">0.10</div>
<div class="t" style="left:847.00px;top:383.82px;width:60px;text-align:center;font-size:7.3px;line-height:7.3px;color:#484848;">159.30</div>
<div class="t" style="left:891.50px;top:383.82px;width:60px;text-align:center;font-size:7.3px;line-height:7.3px;color:#484848;">37.10</div>
<div class="t" style="left:13.50px;top:383.82px;font-size:7.3px;line-height:7.3px;color:#484848;">Jakob Svensen</div>
<div class="b" style="left:158.00px;top:381.00px;width:11.00px;height:14.00px;background:#07739b;"></div>
<div class="b" style="left:151.00px;top:383.00px;width:1.00px;height:10.00px;background:rgba(255,255,255,0.45);"></div>
<div class="b" style="left:157.00px;top:383.00px;width:1.00px;height:10.00px;background:rgba(255,255,255,0.45);"></div>
<div class="t" style="left:159.20px;top:382.57px;font-size:5.0px;line-height:5.0px;color:#fff;">Fer</div>
<div class="t" style="left:94.00px;top:383.91px;width:60px;text-align:center;font-size:7.2px;line-height:7.2px;color:#fff;">09:00-17:00</div>
<div class="t" style="left:149.50px;top:383.91px;width:10px;text-align:center;font-size:7.2px;line-height:7.2px;color:#fff;">1</div>
<div class="b" style="left:253.00px;top:381.00px;width:11.00px;height:14.00px;background:#07739b;"></div>
<div class="b" style="left:246.00px;top:383.00px;width:1.00px;height:10.00px;background:rgba(255,255,255,0.45);"></div>
<div class="b" style="left:252.00px;top:383.00px;width:1.00px;height:10.00px;background:rgba(255,255,255,0.45);"></div>
<div class="t" style="left:254.20px;top:382.57px;font-size:5.0px;line-height:5.0px;color:#fff;">Fer</div>
<div class="t" style="left:189.00px;top:383.91px;width:60px;text-align:center;font-size:7.2px;line-height:7.2px;color:#fff;">09:00-16:24</div>
<div class="b" style="left:348.00px;top:381.00px;width:11.00px;height:14.00px;background:#07739b;"></div>
<div class="b" style="left:341.00px;top:383.00px;width:1.00px;height:10.00px;background:rgba(255,255,255,0.45);"></div>
<div class="b" style="left:347.00px;top:383.00px;width:1.00px;height:10.00px;background:rgba(255,255,255,0.45);"></div>
<div class="t" style="left:349.20px;top:382.57px;font-size:5.0px;line-height:5.0px;color:#fff;">Fer</div>
<div class="t" style="left:283.50px;top:383.91px;width:60px;text-align:center;font-size:7.2px;line-height:7.2px;color:#fff;">09:00-16:24</div>
<div class="b" style="left:443.00px;top:381.00px;width:11.00px;height:14.00px;background:#07739b;"></div>
<div class="b" style="left:436.00px;top:383.00px;width:1.00px;height:10.00px;background:rgba(255,255,255,0.45);"></div>
<div class="b" style="left:442.00px;top:383.00px;width:1.00px;height:10.00px;background:rgba(255,255,255,0.45);"></div>
<div class="t" style="left:444.20px;top:382.57px;font-size:5.0px;line-height:5.0px;color:#fff;">Fer</div>
<div class="t" style="left:378.50px;top:383.91px;width:60px;text-align:center;font-size:7.2px;line-height:7.2px;color:#fff;">09:00-16:24</div>
<div class="b" style="left:538.00px;top:381.00px;width:11.00px;height:14.00px;background:#07739b;"></div>
<div class="b" style="left:530.00px;top:383.00px;width:1.00px;height:10.00px;background:rgba(255,255,255,0.45);"></div>
<div class="b" style="left:537.00px;top:383.00px;width:1.00px;height:10.00px;background:rgba(255,255,255,0.45);"></div>
<div class="t" style="left:539.20px;top:382.57px;font-size:5.0px;line-height:5.0px;color:#fff;">Fer</div>
<div class="t" style="left:473.00px;top:383.91px;width:60px;text-align:center;font-size:7.2px;line-height:7.2px;color:#fff;">09:00-16:24</div>
<div class="b" style="left:633.00px;top:381.00px;width:11.00px;height:14.00px;background:#07739b;"></div>
<div class="b" style="left:625.00px;top:383.00px;width:1.00px;height:10.00px;background:rgba(255,255,255,0.45);"></div>
<div class="b" style="left:632.00px;top:383.00px;width:1.00px;height:10.00px;background:rgba(255,255,255,0.45);"></div>
<div class="t" style="left:634.20px;top:382.57px;font-size:5.0px;line-height:5.0px;color:#fff;">Fer</div>
<div class="b" style="left:727.00px;top:381.00px;width:11.00px;height:14.00px;background:#07739b;"></div>
<div class="b" style="left:720.00px;top:383.00px;width:1.00px;height:10.00px;background:rgba(255,255,255,0.45);"></div>
<div class="b" style="left:726.00px;top:383.00px;width:1.00px;height:10.00px;background:rgba(255,255,255,0.45);"></div>
<div class="t" style="left:728.20px;top:382.57px;font-size:5.0px;line-height:5.0px;color:#fff;">Fer</div>
<div class="b" style="left:761.00px;top:396.00px;width:93.00px;height:13.00px;background:#f0da6c;"></div>
<div class="t" style="left:767.50px;top:398.99px;width:80px;text-align:center;font-size:7.1px;line-height:7.1px;color:#fff;">-11.75</div>
<div class="t" style="left:847.00px;top:398.82px;width:60px;text-align:center;font-size:7.3px;line-height:7.3px;color:#484848;">30.00</div>
<div class="t" style="left:891.50px;top:398.82px;width:60px;text-align:center;font-size:7.3px;line-height:7.3px;color:#484848;">8.25</div>
<div class="t" style="left:13.50px;top:398.82px;font-size:7.3px;line-height:7.3px;color:#484848;">James Eversen</div>
<div class="b" style="left:151.00px;top:398.00px;width:1.00px;height:9.00px;background:#e2e2e4;"></div>
<div class="b" style="left:157.00px;top:398.00px;width:1.00px;height:9.00px;background:#e2e2e4;"></div>
<div class="b" style="left:246.00px;top:398.00px;width:1.00px;height:9.00px;background:#e2e2e4;"></div>
<div class="b" style="left:252.00px;top:398.00px;width:1.00px;height:9.00px;background:#e2e2e4;"></div>
<div class="b" style="left:341.00px;top:398.00px;width:1.00px;height:9.00px;background:#e2e2e4;"></div>
<div class="b" style="left:347.00px;top:398.00px;width:1.00px;height:9.00px;background:#e2e2e4;"></div>
<div class="t" style="left:283.50px;top:398.91px;width:60px;text-align:center;font-size:7.2px;line-height:7.2px;color:#484848;">09:45-19:00</div>
<div class="t" style="left:339.50px;top:398.91px;width:10px;text-align:center;font-size:7.2px;line-height:7.2px;color:#484848;">2</div>
<div class="b" style="left:436.00px;top:398.00px;width:1.00px;height:9.00px;background:#e2e2e4;"></div>
<div class="b" style="left:442.00px;top:398.00px;width:1.00px;height:9.00px;background:#e2e2e4;"></div>
<div class="b" style="left:530.00px;top:398.00px;width:1.00px;height:9.00px;background:#e2e2e4;"></div>
<div class="b" style="left:537.00px;top:398.00px;width:1.00px;height:9.00px;background:#e2e2e4;"></div>
<div class="b" style="left:625.00px;top:398.00px;width:1.00px;height:9.00px;background:#e2e2e4;"></div>
<div class="b" style="left:632.00px;top:398.00px;width:1.00px;height:9.00px;background:#e2e2e4;"></div>
<div class="b" style="left:720.00px;top:398.00px;width:1.00px;height:9.00px;background:#e2e2e4;"></div>
<div class="b" style="left:726.00px;top:398.00px;width:1.00px;height:9.00px;background:#e2e2e4;"></div>
<div class="b" style="left:761.00px;top:410.00px;width:93.00px;height:13.00px;background:#f0da6c;"></div>
<div class="t" style="left:767.50px;top:412.99px;width:80px;text-align:center;font-size:7.1px;line-height:7.1px;color:#fff;">-30.00</div>
<div class="t" style="left:847.00px;top:412.82px;width:60px;text-align:center;font-size:7.3px;line-height:7.3px;color:#484848;">19.25</div>
<div class="t" style="left:891.50px;top:412.82px;width:60px;text-align:center;font-size:7.3px;line-height:7.3px;color:#484848;">0.00</div>
<div class="t" style="left:13.50px;top:412.82px;font-size:7.3px;line-height:7.3px;color:#484848;">Jasmin Noland</div>
<div class="b" style="left:151.00px;top:412.00px;width:1.00px;height:9.00px;background:#e2e2e4;"></div>
<div class="b" style="left:157.00px;top:412.00px;width:1.00px;height:9.00px;background:#e2e2e4;"></div>
<div class="b" style="left:246.00px;top:412.00px;width:1.00px;height:9.00px;background:#e2e2e4;"></div>
<div class="b" style="left:252.00px;top:412.00px;width:1.00px;height:9.00px;background:#e2e2e4;"></div>
<div class="b" style="left:341.00px;top:412.00px;width:1.00px;height:9.00px;background:#e2e2e4;"></div>
<div class="b" style="left:347.00px;top:412.00px;width:1.00px;height:9.00px;background:#e2e2e4;"></div>
<div class="b" style="left:436.00px;top:412.00px;width:1.00px;height:9.00px;background:#e2e2e4;"></div>
<div class="b" style="left:442.00px;top:412.00px;width:1.00px;height:9.00px;background:#e2e2e4;"></div>
<div class="b" style="left:530.00px;top:412.00px;width:1.00px;height:9.00px;background:#e2e2e4;"></div>
<div class="b" style="left:537.00px;top:412.00px;width:1.00px;height:9.00px;background:#e2e2e4;"></div>
<div class="b" style="left:625.00px;top:412.00px;width:1.00px;height:9.00px;background:#e2e2e4;"></div>
<div class="b" style="left:632.00px;top:412.00px;width:1.00px;height:9.00px;background:#e2e2e4;"></div>
<div class="b" style="left:720.00px;top:412.00px;width:1.00px;height:9.00px;background:#e2e2e4;"></div>
<div class="b" style="left:726.00px;top:412.00px;width:1.00px;height:9.00px;background:#e2e2e4;"></div>
<div class="b" style="left:761.00px;top:424.00px;width:93.00px;height:13.00px;background:#f0da6c;"></div>
<div class="t" style="left:767.50px;top:426.99px;width:80px;text-align:center;font-size:7.1px;line-height:7.1px;color:#fff;">-17.25</div>
<div class="t" style="left:847.00px;top:426.82px;width:60px;text-align:center;font-size:7.3px;line-height:7.3px;color:#484848;">56.50</div>
<div class="t" style="left:891.50px;top:426.82px;width:60px;text-align:center;font-size:7.3px;line-height:7.3px;color:#484848;">19.75</div>
<div class="t" style="left:13.50px;top:426.82px;font-size:7.3px;line-height:7.3px;color:#484848;">Karla Pedersen</div>
<div class="b" style="left:151.00px;top:426.00px;width:1.00px;height:9.00px;background:#e2e2e4;"></div>
<div class="b" style="left:157.00px;top:426.00px;width:1.00px;height:9.00px;background:#e2e2e4;"></div>
<div class="b" style="left:246.00px;top:426.00px;width:1.00px;height:9.00px;background:#e2e2e4;"></div>
<div class="b" style="left:252.00px;top:426.00px;width:1.00px;height:9.00px;background:#e2e2e4;"></div>
<div class="t" style="left:189.00px;top:426.91px;width:60px;text-align:center;font-size:7.2px;line-height:7.2px;color:#484848;">09:45-19:00</div>
<div class="t" style="left:244.50px;top:426.91px;width:10px;text-align:center;font-size:7.2px;line-height:7.2px;color:#484848;">2</div>
<div class="b" style="left:341.00px;top:426.00px;width:1.00px;height:9.00px;background:#e2e2e4;"></div>
<div class="b" style="left:347.00px;top:426.00px;width:1.00px;height:9.00px;background:#e2e2e4;"></div>
<div class="b" style="left:436.00px;top:426.00px;width:1.00px;height:9.00px;background:#e2e2e4;"></div>
<div class="b" style="left:442.00px;top:426.00px;width:1.00px;height:9.00px;background:#e2e2e4;"></div>
<div class="t" style="left:378.50px;top:426.91px;width:60px;text-align:center;font-size:7.2px;line-height:7.2px;color:#484848;">09:45-17:00</div>
<div class="t" style="left:434.50px;top:426.91px;width:10px;text-align:center;font-size:7.2px;line-height:7.2px;color:#484848;">1</div>
<div class="b" style="left:530.00px;top:426.00px;width:1.00px;height:9.00px;background:#e2e2e4;"></div>
<div class="b" style="left:537.00px;top:426.00px;width:1.00px;height:9.00px;background:#e2e2e4;"></div>
<div class="b" style="left:625.00px;top:426.00px;width:1.00px;height:9.00px;background:#e2e2e4;"></div>
<div class="b" style="left:632.00px;top:426.00px;width:1.00px;height:9.00px;background:#e2e2e4;"></div>
<div class="t" style="left:568.00px;top:426.91px;width:60px;text-align:center;font-size:7.2px;line-height:7.2px;color:#484848;">12:00-17:15</div>
<div class="t" style="left:624.00px;top:426.91px;width:10px;text-align:center;font-size:7.2px;line-height:7.2px;color:#484848;">1</div>
<div class="b" style="left:720.00px;top:426.00px;width:1.00px;height:9.00px;background:#e2e2e4;"></div>
<div class="b" style="left:726.00px;top:426.00px;width:1.00px;height:9.00px;background:#e2e2e4;"></div>
<div class="b" style="left:761.00px;top:438.00px;width:93.00px;height:13.00px;background:#f0da6c;"></div>
<div class="t" style="left:767.50px;top:440.99px;width:80px;text-align:center;font-size:7.1px;line-height:7.1px;color:#fff;">-37.00</div>
<div class="t" style="left:847.00px;top:440.82px;width:60px;text-align:center;font-size:7.3px;line-height:7.3px;color:#484848;">21.00</div>
<div class="t" style="left:891.50px;top:440.82px;width:60px;text-align:center;font-size:7.3px;line-height:7.3px;color:#484848;">0.00</div>
<div class="t" style="left:13.50px;top:440.82px;font-size:7.3px;line-height:7.3px;color:#484848;">Kristoffer Nielsen</div>
<div class="b" style="left:151.00px;top:440.00px;width:1.00px;height:9.00px;background:#e2e2e4;"></div>
<div class="b" style="left:157.00px;top:440.00px;width:1.00px;height:9.00px;background:#e2e2e4;"></div>
<div class="b" style="left:246.00px;top:440.00px;width:1.00px;height:9.00px;background:#e2e2e4;"></div>
<div class="b" style="left:252.00px;top:440.00px;width:1.00px;height:9.00px;background:#e2e2e4;"></div>
<div class="b" style="left:341.00px;top:440.00px;width:1.00px;height:9.00px;background:#e2e2e4;"></div>
<div class="b" style="left:347.00px;top:440.00px;width:1.00px;height:9.00px;background:#e2e2e4;"></div>
<div class="b" style="left:436.00px;top:440.00px;width:1.00px;height:9.00px;background:#e2e2e4;"></div>
<div class="b" style="left:442.00px;top:440.00px;width:1.00px;height:9.00px;background:#e2e2e4;"></div>
<div class="b" style="left:530.00px;top:440.00px;width:1.00px;height:9.00px;background:#e2e2e4;"></div>
<div class="b" style="left:537.00px;top:440.00px;width:1.00px;height:9.00px;background:#e2e2e4;"></div>
<div class="b" style="left:625.00px;top:440.00px;width:1.00px;height:9.00px;background:#e2e2e4;"></div>
<div class="b" style="left:632.00px;top:440.00px;width:1.00px;height:9.00px;background:#e2e2e4;"></div>
<div class="b" style="left:720.00px;top:440.00px;width:1.00px;height:9.00px;background:#e2e2e4;"></div>
<div class="b" style="left:726.00px;top:440.00px;width:1.00px;height:9.00px;background:#e2e2e4;"></div>
<div class="b" style="left:761.00px;top:452.00px;width:93.00px;height:14.00px;background:#f0da6c;"></div>
<div class="t" style="left:767.50px;top:454.99px;width:80px;text-align:center;font-size:7.1px;line-height:7.1px;color:#fff;">-15.00</div>
<div class="t" style="left:847.00px;top:454.82px;width:60px;text-align:center;font-size:7.3px;line-height:7.3px;color:#484848;">22.50</div>
<div class="t" style="left:891.50px;top:454.82px;width:60px;text-align:center;font-size:7.3px;line-height:7.3px;color:#484848;">0.00</div>
<div class="t" style="left:13.50px;top:454.82px;font-size:7.3px;line-height:7.3px;color:#484848;">Malissa Alfredo</div>
<div class="b" style="left:151.00px;top:454.00px;width:1.00px;height:10.00px;background:#e2e2e4;"></div>
<div class="b" style="left:157.00px;top:454.00px;width:1.00px;height:10.00px;background:#e2e2e4;"></div>
<div class="b" style="left:246.00px;top:454.00px;width:1.00px;height:10.00px;background:#e2e2e4;"></div>
<div class="b" style="left:252.00px;top:454.00px;width:1.00px;height:10.00px;background:#e2e2e4;"></div>
<div class="b" style="left:341.00px;top:454.00px;width:1.00px;height:10.00px;background:#e2e2e4;"></div>
<div class="b" style="left:347.00px;top:454.00px;width:1.00px;height:10.00px;background:#e2e2e4;"></div>
<div class="b" style="left:436.00px;top:454.00px;width:1.00px;height:10.00px;background:#e2e2e4;"></div>
<div class="b" style="left:442.00px;top:454.00px;width:1.00px;height:10.00px;background:#e2e2e4;"></div>
<div class="b" style="left:530.00px;top:454.00px;width:1.00px;height:10.00px;background:#e2e2e4;"></div>
<div class="b" style="left:537.00px;top:454.00px;width:1.00px;height:10.00px;background:#e2e2e4;"></div>
<div class="b" style="left:625.00px;top:454.00px;width:1.00px;height:10.00px;background:#e2e2e4;"></div>
<div class="b" style="left:632.00px;top:454.00px;width:1.00px;height:10.00px;background:#e2e2e4;"></div>
<div class="b" style="left:720.00px;top:454.00px;width:1.00px;height:10.00px;background:#e2e2e4;"></div>
<div class="b" style="left:726.00px;top:454.00px;width:1.00px;height:10.00px;background:#e2e2e4;"></div>
<div class="b" style="left:761.00px;top:467.00px;width:93.00px;height:13.00px;background:#f0da6c;"></div>
<div class="t" style="left:767.50px;top:469.99px;width:80px;text-align:center;font-size:7.1px;line-height:7.1px;color:#fff;">-12.14</div>
<div class="t" style="left:847.00px;top:469.82px;width:60px;text-align:center;font-size:7.3px;line-height:7.3px;color:#484848;">32.58</div>
<div class="t" style="left:891.50px;top:469.82px;width:60px;text-align:center;font-size:7.3px;line-height:7.3px;color:#484848;">7.86</div>
<div class="t" style="left:13.50px;top:469.82px;font-size:7.3px;line-height:7.3px;color:#484848;">Olivia Petersen</div>
<div class="b" style="left:97.00px;top:467.00px;width:94.00px;height:13.00px;background:#1820c9;"></div>
<div class="b" style="left:158.00px;top:467.00px;width:11.00px;height:13.00px;background:#1517a0;"></div>
<div class="b" style="left:151.00px;top:469.00px;width:1.00px;height:9.00px;background:rgba(255,255,255,0.55);"></div>
<div class="b" style="left:157.00px;top:469.00px;width:1.00px;height:9.00px;background:rgba(255,255,255,0.55);"></div>
<div class="t" style="left:159.20px;top:468.57px;font-size:5.0px;line-height:5.0px;color:#fff;">Hel</div>
<div class="t" style="left:94.00px;top:469.91px;width:60px;text-align:center;font-size:7.2px;line-height:7.2px;color:#fff;">09:00-11:51</div>
<div class="b" style="left:246.00px;top:469.00px;width:1.00px;height:9.00px;background:#e2e2e4;"></div>
<div class="b" style="left:252.00px;top:469.00px;width:1.00px;height:9.00px;background:#e2e2e4;"></div>
<div class="b" style="left:341.00px;top:469.00px;width:1.00px;height:9.00px;background:#e2e2e4;"></div>
<div class="b" style="left:347.00px;top:469.00px;width:1.00px;height:9.00px;background:#e2e2e4;"></div>
<div class="b" style="left:436.00px;top:469.00px;width:1.00px;height:9.00px;background:#e2e2e4;"></div>
<div class="b" style="left:442.00px;top:469.00px;width:1.00px;height:9.00px;background:#e2e2e4;"></div>
<div class="b" style="left:530.00px;top:469.00px;width:1.00px;height:9.00px;background:#e2e2e4;"></div>
<div class="b" style="left:537.00px;top:469.00px;width:1.00px;height:9.00px;background:#e2e2e4;"></div>
<div class="b" style="left:625.00px;top:469.00px;width:1.00px;height:9.00px;background:#e2e2e4;"></div>
<div class="b" style="left:632.00px;top:469.00px;width:1.00px;height:9.00px;background:#e2e2e4;"></div>
<div class="t" style="left:568.00px;top:469.91px;width:60px;text-align:center;font-size:7.2px;line-height:7.2px;color:#484848;">09:30-15:00</div>
<div class="t" style="left:624.00px;top:469.91px;width:10px;text-align:center;font-size:7.2px;line-height:7.2px;color:#484848;">1</div>
<div class="b" style="left:720.00px;top:469.00px;width:1.00px;height:9.00px;background:#e2e2e4;"></div>
<div class="b" style="left:726.00px;top:469.00px;width:1.00px;height:9.00px;background:#e2e2e4;"></div>
<div class="b" style="left:761.00px;top:481.00px;width:93.00px;height:13.00px;background:#f0da6c;"></div>
<div class="t" style="left:767.50px;top:483.99px;width:80px;text-align:center;font-size:7.1px;line-height:7.1px;color:#fff;">-13.00</div>
<div class="t" style="left:847.00px;top:483.82px;width:60px;text-align:center;font-size:7.3px;line-height:7.3px;color:#484848;">41.50</div>
<div class="t" style="left:891.50px;top:483.82px;width:60px;text-align:center;font-size:7.3px;line-height:7.3px;color:#484848;">7.00</div>
<div class="t" style="left:13.50px;top:483.82px;font-size:7.3px;line-height:7.3px;color:#484848;">Sofus Kanelius</div>
<div class="b" style="left:151.00px;top:483.00px;width:1.00px;height:9.00px;background:#e2e2e4;"></div>
<div class="b" style="left:157.00px;top:483.00px;width:1.00px;height:9.00px;background:#e2e2e4;"></div>
<div class="b" style="left:246.00px;top:483.00px;width:1.00px;height:9.00px;background:#e2e2e4;"></div>
<div class="b" style="left:252.00px;top:483.00px;width:1.00px;height:9.00px;background:#e2e2e4;"></div>
<div class="b" style="left:341.00px;top:483.00px;width:1.00px;height:9.00px;background:#e2e2e4;"></div>
<div class="b" style="left:347.00px;top:483.00px;width:1.00px;height:9.00px;background:#e2e2e4;"></div>
<div class="b" style="left:436.00px;top:483.00px;width:1.00px;height:9.00px;background:#e2e2e4;"></div>
<div class="b" style="left:442.00px;top:483.00px;width:1.00px;height:9.00px;background:#e2e2e4;"></div>
<div class="b" style="left:530.00px;top:483.00px;width:1.00px;height:9.00px;background:#e2e2e4;"></div>
<div class="b" style="left:537.00px;top:483.00px;width:1.00px;height:9.00px;background:#e2e2e4;"></div>
<div class="b" style="left:625.00px;top:483.00px;width:1.00px;height:9.00px;background:#e2e2e4;"></div>
<div class="b" style="left:632.00px;top:483.00px;width:1.00px;height:9.00px;background:#e2e2e4;"></div>
<div class="b" style="left:720.00px;top:483.00px;width:1.00px;height:9.00px;background:#e2e2e4;"></div>
<div class="b" style="left:726.00px;top:483.00px;width:1.00px;height:9.00px;background:#e2e2e4;"></div>
<div class="t" style="left:663.00px;top:483.91px;width:60px;text-align:center;font-size:7.2px;line-height:7.2px;color:#484848;">09:30-17:00</div>
<div class="t" style="left:718.50px;top:483.91px;width:10px;text-align:center;font-size:7.2px;line-height:7.2px;color:#484848;">1</div>
<div class="b" style="left:761.00px;top:495.00px;width:93.00px;height:13.00px;background:#ff6f59;"></div>
<div class="t" style="left:767.50px;top:497.99px;width:80px;text-align:center;font-size:7.1px;line-height:7.1px;color:#fff;">9.00</div>
<div class="t" style="left:847.00px;top:497.82px;width:60px;text-align:center;font-size:7.3px;line-height:7.3px;color:#484848;">63.00</div>
<div class="t" style="left:891.50px;top:497.82px;width:60px;text-align:center;font-size:7.3px;line-height:7.3px;color:#484848;">24.00</div>
<div class="t" style="left:13.50px;top:497.82px;font-size:7.3px;line-height:7.3px;color:#484848;">Victor Andersen</div>
<div class="b" style="left:151.00px;top:497.00px;width:1.00px;height:9.00px;background:#e2e2e4;"></div>
<div class="b" style="left:157.00px;top:497.00px;width:1.00px;height:9.00px;background:#e2e2e4;"></div>
<div class="t" style="left:94.00px;top:497.91px;width:60px;text-align:center;font-size:7.2px;line-height:7.2px;color:#484848;">09:00-19:00</div>
<div class="t" style="left:149.50px;top:497.91px;width:10px;text-align:center;font-size:7.2px;line-height:7.2px;color:#484848;">2</div>
<div class="b" style="left:246.00px;top:497.00px;width:1.00px;height:9.00px;background:#e2e2e4;"></div>
<div class="b" style="left:252.00px;top:497.00px;width:1.00px;height:9.00px;background:#e2e2e4;"></div>
<div class="b" style="left:341.00px;top:497.00px;width:1.00px;height:9.00px;background:#e2e2e4;"></div>
<div class="b" style="left:347.00px;top:497.00px;width:1.00px;height:9.00px;background:#e2e2e4;"></div>
<div class="t" style="left:283.50px;top:497.91px;width:60px;text-align:center;font-size:7.2px;line-height:7.2px;color:#484848;">12:00-19:15</div>
<div class="t" style="left:339.50px;top:497.91px;width:10px;text-align:center;font-size:7.2px;line-height:7.2px;color:#484848;">1</div>
<div class="b" style="left:436.00px;top:497.00px;width:1.00px;height:9.00px;background:#e2e2e4;"></div>
<div class="b" style="left:442.00px;top:497.00px;width:1.00px;height:9.00px;background:#e2e2e4;"></div>
<div class="t" style="left:378.50px;top:497.91px;width:60px;text-align:center;font-size:7.2px;line-height:7.2px;color:#484848;">09:45-19:00</div>
<div class="t" style="left:434.50px;top:497.91px;width:10px;text-align:center;font-size:7.2px;line-height:7.2px;color:#484848;">2</div>
<div class="b" style="left:530.00px;top:497.00px;width:1.00px;height:9.00px;background:#e2e2e4;"></div>
<div class="b" style="left:537.00px;top:497.00px;width:1.00px;height:9.00px;background:#e2e2e4;"></div>
<div class="b" style="left:625.00px;top:497.00px;width:1.00px;height:9.00px;background:#e2e2e4;"></div>
<div class="b" style="left:632.00px;top:497.00px;width:1.00px;height:9.00px;background:#e2e2e4;"></div>
<div class="b" style="left:720.00px;top:497.00px;width:1.00px;height:9.00px;background:#e2e2e4;"></div>
<div class="b" style="left:726.00px;top:497.00px;width:1.00px;height:9.00px;background:#e2e2e4;"></div>
<div class="b" style="left:761.00px;top:509.00px;width:93.00px;height:13.00px;background:#f0da6c;"></div>
<div class="t" style="left:767.50px;top:511.99px;width:80px;text-align:center;font-size:7.1px;line-height:7.1px;color:#fff;">-27.46</div>
<div class="t" style="left:847.00px;top:511.82px;width:60px;text-align:center;font-size:7.3px;line-height:7.3px;color:#484848;">49.12</div>
<div class="t" style="left:891.50px;top:511.82px;width:60px;text-align:center;font-size:7.3px;line-height:7.3px;color:#484848;">9.54</div>
<div class="t" style="left:13.50px;top:511.82px;font-size:7.3px;line-height:7.3px;color:#484848;">Henrik Bertelsen</div>
<div class="b" style="left:97.00px;top:509.00px;width:94.00px;height:13.00px;background:#1820c9;"></div>
<div class="b" style="left:158.00px;top:509.00px;width:11.00px;height:13.00px;background:#1517a0;"></div>
<div class="b" style="left:151.00px;top:511.00px;width:1.00px;height:9.00px;background:rgba(255,255,255,0.55);"></div>
<div class="b" style="left:157.00px;top:511.00px;width:1.00px;height:9.00px;background:rgba(255,255,255,0.55);"></div>
<div class="t" style="left:159.20px;top:510.57px;font-size:5.0px;line-height:5.0px;color:#fff;">Hel</div>
<div class="t" style="left:94.00px;top:511.91px;width:60px;text-align:center;font-size:7.2px;line-height:7.2px;color:#fff;">09:00-14:17</div>
<div class="b" style="left:246.00px;top:511.00px;width:1.00px;height:9.00px;background:#e2e2e4;"></div>
<div class="b" style="left:252.00px;top:511.00px;width:1.00px;height:9.00px;background:#e2e2e4;"></div>
<div class="b" style="left:341.00px;top:511.00px;width:1.00px;height:9.00px;background:#e2e2e4;"></div>
<div class="b" style="left:347.00px;top:511.00px;width:1.00px;height:9.00px;background:#e2e2e4;"></div>
<div class="b" style="left:436.00px;top:511.00px;width:1.00px;height:9.00px;background:#e2e2e4;"></div>
<div class="b" style="left:442.00px;top:511.00px;width:1.00px;height:9.00px;background:#e2e2e4;"></div>
<div class="b" style="left:530.00px;top:511.00px;width:1.00px;height:9.00px;background:#e2e2e4;"></div>
<div class="b" style="left:537.00px;top:511.00px;width:1.00px;height:9.00px;background:#e2e2e4;"></div>
<div class="t" style="left:473.00px;top:511.91px;width:60px;text-align:center;font-size:7.2px;line-height:7.2px;color:#484848;">15:00-19:15</div>
<div class="b" style="left:625.00px;top:511.00px;width:1.00px;height:9.00px;background:#e2e2e4;"></div>
<div class="b" style="left:632.00px;top:511.00px;width:1.00px;height:9.00px;background:#e2e2e4;"></div>
<div class="b" style="left:720.00px;top:511.00px;width:1.00px;height:9.00px;background:#e2e2e4;"></div>
<div class="b" style="left:726.00px;top:511.00px;width:1.00px;height:9.00px;background:#e2e2e4;"></div>
<div class="b" style="left:761.00px;top:523.00px;width:93.00px;height:14.00px;background:#f0da6c;"></div>
<div class="t" style="left:767.50px;top:525.99px;width:80px;text-align:center;font-size:7.1px;line-height:7.1px;color:#fff;">-11.25</div>
<div class="t" style="left:847.00px;top:525.82px;width:60px;text-align:center;font-size:7.3px;line-height:7.3px;color:#484848;">43.50</div>
<div class="t" style="left:891.50px;top:525.82px;width:60px;text-align:center;font-size:7.3px;line-height:7.3px;color:#484848;">10.75</div>
<div class="t" style="left:13.50px;top:525.82px;font-size:7.3px;line-height:7.3px;color:#484848;">Victoria Hanna...</div>
<div class="b" style="left:151.00px;top:525.00px;width:1.00px;height:10.00px;background:#e2e2e4;"></div>
<div class="b" style="left:157.00px;top:525.00px;width:1.00px;height:10.00px;background:#e2e2e4;"></div>
<div class="b" style="left:246.00px;top:525.00px;width:1.00px;height:10.00px;background:#e2e2e4;"></div>
<div class="b" style="left:252.00px;top:525.00px;width:1.00px;height:10.00px;background:#e2e2e4;"></div>
<div class="b" style="left:341.00px;top:525.00px;width:1.00px;height:10.00px;background:#e2e2e4;"></div>
<div class="b" style="left:347.00px;top:525.00px;width:1.00px;height:10.00px;background:#e2e2e4;"></div>
<div class="b" style="left:436.00px;top:525.00px;width:1.00px;height:10.00px;background:#e2e2e4;"></div>
<div class="b" style="left:442.00px;top:525.00px;width:1.00px;height:10.00px;background:#e2e2e4;"></div>
<div class="b" style="left:530.00px;top:525.00px;width:1.00px;height:10.00px;background:#e2e2e4;"></div>
<div class="b" style="left:537.00px;top:525.00px;width:1.00px;height:10.00px;background:#e2e2e4;"></div>
<div class="b" style="left:625.00px;top:525.00px;width:1.00px;height:10.00px;background:#e2e2e4;"></div>
<div class="b" style="left:632.00px;top:525.00px;width:1.00px;height:10.00px;background:#e2e2e4;"></div>
<div class="t" style="left:568.00px;top:525.91px;width:60px;text-align:center;font-size:7.2px;line-height:7.2px;color:#484848;">09:30-15:00</div>
<div class="t" style="left:624.00px;top:525.91px;width:10px;text-align:center;font-size:7.2px;line-height:7.2px;color:#484848;">1</div>
<div class="b" style="left:720.00px;top:525.00px;width:1.00px;height:10.00px;background:#e2e2e4;"></div>
<div class="b" style="left:726.00px;top:525.00px;width:1.00px;height:10.00px;background:#e2e2e4;"></div>
<div class="t" style="left:663.00px;top:525.91px;width:60px;text-align:center;font-size:7.2px;line-height:7.2px;color:#484848;">11:00-17:15</div>
<div class="t" style="left:718.50px;top:525.91px;width:10px;text-align:center;font-size:7.2px;line-height:7.2px;color:#484848;">1</div>
<div class="b" style="left:761.00px;top:538.00px;width:93.00px;height:13.00px;background:#f0da6c;"></div>
<div class="t" style="left:767.50px;top:540.99px;width:80px;text-align:center;font-size:7.1px;line-height:7.1px;color:#fff;">-30.25</div>
<div class="t" style="left:847.00px;top:540.82px;width:60px;text-align:center;font-size:7.3px;line-height:7.3px;color:#484848;">13.50</div>
<div class="t" style="left:891.50px;top:540.82px;width:60px;text-align:center;font-size:7.3px;line-height:7.3px;color:#484848;">6.75</div>
<div class="t" style="left:13.50px;top:540.82px;font-size:7.3px;line-height:7.3px;color:#484848;">Hannah Hanson</div>
<div class="b" style="left:151.00px;top:540.00px;width:1.00px;height:9.00px;background:#e2e2e4;"></div>
<div class="b" style="left:157.00px;top:540.00px;width:1.00px;height:9.00px;background:#e2e2e4;"></div>
<div class="b" style="left:246.00px;top:540.00px;width:1.00px;height:9.00px;background:#e2e2e4;"></div>
<div class="b" style="left:252.00px;top:540.00px;width:1.00px;height:9.00px;background:#e2e2e4;"></div>
<div class="t" style="left:189.00px;top:540.91px;width:60px;text-align:center;font-size:7.2px;line-height:7.2px;color:#484848;">12:00-19:15</div>
<div class="t" style="left:244.50px;top:540.91px;width:10px;text-align:center;font-size:7.2px;line-height:7.2px;color:#484848;">1</div>
<div class="b" style="left:341.00px;top:540.00px;width:1.00px;height:9.00px;background:#e2e2e4;"></div>
<div class="b" style="left:347.00px;top:540.00px;width:1.00px;height:9.00px;background:#e2e2e4;"></div>
<div class="b" style="left:436.00px;top:540.00px;width:1.00px;height:9.00px;background:#e2e2e4;"></div>
<div class="b" style="left:442.00px;top:540.00px;width:1.00px;height:9.00px;background:#e2e2e4;"></div>
<div class="b" style="left:530.00px;top:540.00px;width:1.00px;height:9.00px;background:#e2e2e4;"></div>
<div class="b" style="left:537.00px;top:540.00px;width:1.00px;height:9.00px;background:#e2e2e4;"></div>
<div class="b" style="left:625.00px;top:540.00px;width:1.00px;height:9.00px;background:#e2e2e4;"></div>
<div class="b" style="left:632.00px;top:540.00px;width:1.00px;height:9.00px;background:#e2e2e4;"></div>
<div class="b" style="left:720.00px;top:540.00px;width:1.00px;height:9.00px;background:#e2e2e4;"></div>
<div class="b" style="left:726.00px;top:540.00px;width:1.00px;height:9.00px;background:#e2e2e4;"></div>
<div class="b" style="left:761.00px;top:552.00px;width:93.00px;height:13.00px;background:#f0da6c;"></div>
<div class="t" style="left:767.50px;top:554.99px;width:80px;text-align:center;font-size:7.1px;line-height:7.1px;color:#fff;">-24.00</div>
<div class="t" style="left:847.00px;top:554.82px;width:60px;text-align:center;font-size:7.3px;line-height:7.3px;color:#484848;">49.25</div>
<div class="t" style="left:891.50px;top:554.82px;width:60px;text-align:center;font-size:7.3px;line-height:7.3px;color:#484848;">6.00</div>
<div class="t" style="left:13.50px;top:554.82px;font-size:7.3px;line-height:7.3px;color:#484848;">Ida Hansen</div>
<div class="b" style="left:97.00px;top:552.00px;width:94.00px;height:13.00px;background:#1820c9;"></div>
<div class="b" style="left:158.00px;top:552.00px;width:11.00px;height:13.00px;background:#1517a0;"></div>
<div class="b" style="left:151.00px;top:554.00px;width:1.00px;height:9.00px;background:rgba(255,255,255,0.55);"></div>
<div class="b" style="left:157.00px;top:554.00px;width:1.00px;height:9.00px;background:rgba(255,255,255,0.55);"></div>
<div class="t" style="left:159.20px;top:553.57px;font-size:5.0px;line-height:5.0px;color:#fff;">Hel</div>
<div class="t" style="left:94.00px;top:554.91px;width:60px;text-align:center;font-size:7.2px;line-height:7.2px;color:#fff;">09:00-15:00</div>
<div class="b" style="left:246.00px;top:554.00px;width:1.00px;height:9.00px;background:#e2e2e4;"></div>
<div class="b" style="left:252.00px;top:554.00px;width:1.00px;height:9.00px;background:#e2e2e4;"></div>
<div class="b" style="left:341.00px;top:554.00px;width:1.00px;height:9.00px;background:#e2e2e4;"></div>
<div class="b" style="left:347.00px;top:554.00px;width:1.00px;height:9.00px;background:#e2e2e4;"></div>
<div class="b" style="left:436.00px;top:554.00px;width:1.00px;height:9.00px;background:#e2e2e4;"></div>
<div class="b" style="left:442.00px;top:554.00px;width:1.00px;height:9.00px;background:#e2e2e4;"></div>
<div class="b" style="left:530.00px;top:554.00px;width:1.00px;height:9.00px;background:#e2e2e4;"></div>
<div class="b" style="left:537.00px;top:554.00px;width:1.00px;height:9.00px;background:#e2e2e4;"></div>
<div class="b" style="left:625.00px;top:554.00px;width:1.00px;height:9.00px;background:#e2e2e4;"></div>
<div class="b" style="left:632.00px;top:554.00px;width:1.00px;height:9.00px;background:#e2e2e4;"></div>
<div class="b" style="left:720.00px;top:554.00px;width:1.00px;height:9.00px;background:#e2e2e4;"></div>
<div class="b" style="left:726.00px;top:554.00px;width:1.00px;height:9.00px;background:#e2e2e4;"></div>
<div class="t" style="left:767.50px;top:568.99px;width:80px;text-align:center;font-size:7.1px;line-height:7.1px;color:#fff;"></div>
<div class="t" style="left:847.00px;top:568.82px;width:60px;text-align:center;font-size:7.3px;line-height:7.3px;color:#484848;">17.00</div>
<div class="t" style="left:891.50px;top:568.82px;width:60px;text-align:center;font-size:7.3px;line-height:7.3px;color:#484848;">8.50</div>
<div class="t" style="left:13.50px;top:568.82px;font-size:7.3px;line-height:7.3px;color:#484848;">Torben Thomp...</div>
<div class="b" style="left:151.00px;top:568.00px;width:1.00px;height:9.00px;background:#e2e2e4;"></div>
<div class="b" style="left:157.00px;top:568.00px;width:1.00px;height:9.00px;background:#e2e2e4;"></div>
<div class="b" style="left:246.00px;top:568.00px;width:1.00px;height:9.00px;background:#e2e2e4;"></div>
<div class="b" style="left:252.00px;top:568.00px;width:1.00px;height:9.00px;background:#e2e2e4;"></div>
<div class="b" style="left:341.00px;top:568.00px;width:1.00px;height:9.00px;background:#e2e2e4;"></div>
<div class="b" style="left:347.00px;top:568.00px;width:1.00px;height:9.00px;background:#e2e2e4;"></div>
<div class="b" style="left:436.00px;top:568.00px;width:1.00px;height:9.00px;background:#e2e2e4;"></div>
<div class="b" style="left:442.00px;top:568.00px;width:1.00px;height:9.00px;background:#e2e2e4;"></div>
<div class="b" style="left:530.00px;top:568.00px;width:1.00px;height:9.00px;background:#e2e2e4;"></div>
<div class="b" style="left:537.00px;top:568.00px;width:1.00px;height:9.00px;background:#e2e2e4;"></div>
<div class="t" style="left:473.00px;top:568.91px;width:60px;text-align:center;font-size:7.2px;line-height:7.2px;color:#484848;">09:45-19:15</div>
<div class="t" style="left:529.00px;top:568.91px;width:10px;text-align:center;font-size:7.2px;line-height:7.2px;color:#484848;">2</div>
<div class="b" style="left:625.00px;top:568.00px;width:1.00px;height:9.00px;background:#e2e2e4;"></div>
<div class="b" style="left:632.00px;top:568.00px;width:1.00px;height:9.00px;background:#e2e2e4;"></div>
<div class="b" style="left:720.00px;top:568.00px;width:1.00px;height:9.00px;background:#e2e2e4;"></div>
<div class="b" style="left:726.00px;top:568.00px;width:1.00px;height:9.00px;background:#e2e2e4;"></div>
<div class="b" style="left:97.00px;top:580.00px;width:663.00px;height:13.00px;background:#049acf;"></div>
<div class="t" style="left:767.50px;top:582.99px;width:80px;text-align:center;font-size:7.1px;line-height:7.1px;color:#fff;">31.25</div>
<div class="t" style="left:847.00px;top:582.82px;width:60px;text-align:center;font-size:7.3px;line-height:7.3px;color:#484848;">47.50</div>
<div class="t" style="left:891.50px;top:582.82px;width:60px;text-align:center;font-size:7.3px;line-height:7.3px;color:#484848;">31.25</div>
<div class="t" style="left:13.50px;top:582.82px;font-size:7.3px;line-height:7.3px;color:#484848;">Monica Madsen</div>
<div class="b" style="left:158.00px;top:580.00px;width:11.00px;height:13.00px;background:#07739b;"></div>
<div class="b" style="left:151.00px;top:582.00px;width:1.00px;height:9.00px;background:rgba(255,255,255,0.45);"></div>
<div class="b" style="left:157.00px;top:582.00px;width:1.00px;height:9.00px;background:rgba(255,255,255,0.45);"></div>
<div class="t" style="left:159.20px;top:581.57px;font-size:5.0px;line-height:5.0px;color:#fff;">Fer</div>
<div class="t" style="left:94.00px;top:582.91px;width:60px;text-align:center;font-size:7.2px;line-height:7.2px;color:#fff;">16:00-19:00</div>
<div class="b" style="left:253.00px;top:580.00px;width:11.00px;height:13.00px;background:#07739b;"></div>
<div class="b" style="left:246.00px;top:582.00px;width:1.00px;height:9.00px;background:rgba(255,255,255,0.45);"></div>
<div class="b" style="left:252.00px;top:582.00px;width:1.00px;height:9.00px;background:rgba(255,255,255,0.45);"></div>
<div class="t" style="left:254.20px;top:581.57px;font-size:5.0px;line-height:5.0px;color:#fff;">Fer</div>
<div class="t" style="left:189.00px;top:582.91px;width:60px;text-align:center;font-size:7.2px;line-height:7.2px;color:#fff;">09:00-16:30</div>
<div class="b" style="left:348.00px;top:580.00px;width:11.00px;height:13.00px;background:#07739b;"></div>
<div class="b" style="left:341.00px;top:582.00px;width:1.00px;height:9.00px;background:rgba(255,255,255,0.45);"></div>
<div class="b" style="left:347.00px;top:582.00px;width:1.00px;height:9.00px;background:rgba(255,255,255,0.45);"></div>
<div class="t" style="left:349.20px;top:581.57px;font-size:5.0px;line-height:5.0px;color:#fff;">Fer</div>
<div class="t" style="left:283.50px;top:582.91px;width:60px;text-align:center;font-size:7.2px;line-height:7.2px;color:#fff;">16:00-19:15</div>
<div class="b" style="left:443.00px;top:580.00px;width:11.00px;height:13.00px;background:#07739b;"></div>
<div class="b" style="left:436.00px;top:582.00px;width:1.00px;height:9.00px;background:rgba(255,255,255,0.45);"></div>
<div class="b" style="left:442.00px;top:582.00px;width:1.00px;height:9.00px;background:rgba(255,255,255,0.45);"></div>
<div class="t" style="left:444.20px;top:581.57px;font-size:5.0px;line-height:5.0px;color:#fff;">Fer</div>
<div class="t" style="left:378.50px;top:582.91px;width:60px;text-align:center;font-size:7.2px;line-height:7.2px;color:#fff;">09:00-16:30</div>
<div class="b" style="left:538.00px;top:580.00px;width:11.00px;height:13.00px;background:#07739b;"></div>
<div class="b" style="left:530.00px;top:582.00px;width:1.00px;height:9.00px;background:rgba(255,255,255,0.45);"></div>
<div class="b" style="left:537.00px;top:582.00px;width:1.00px;height:9.00px;background:rgba(255,255,255,0.45);"></div>
<div class="t" style="left:539.20px;top:581.57px;font-size:5.0px;line-height:5.0px;color:#fff;">Fer</div>
<div class="t" style="left:473.00px;top:582.91px;width:60px;text-align:center;font-size:7.2px;line-height:7.2px;color:#fff;">15:00-19:15</div>
<div class="b" style="left:633.00px;top:580.00px;width:11.00px;height:13.00px;background:#07739b;"></div>
<div class="b" style="left:625.00px;top:582.00px;width:1.00px;height:9.00px;background:rgba(255,255,255,0.45);"></div>
<div class="b" style="left:632.00px;top:582.00px;width:1.00px;height:9.00px;background:rgba(255,255,255,0.45);"></div>
<div class="t" style="left:634.20px;top:581.57px;font-size:5.0px;line-height:5.0px;color:#fff;">Fer</div>
<div class="t" style="left:568.00px;top:582.91px;width:60px;text-align:center;font-size:7.2px;line-height:7.2px;color:#fff;">11:00-17:15</div>
<div class="t" style="left:624.00px;top:582.91px;width:10px;text-align:center;font-size:7.2px;line-height:7.2px;color:#fff;">1</div>
<div class="b" style="left:727.00px;top:580.00px;width:11.00px;height:13.00px;background:#07739b;"></div>
<div class="b" style="left:720.00px;top:582.00px;width:1.00px;height:9.00px;background:rgba(255,255,255,0.45);"></div>
<div class="b" style="left:726.00px;top:582.00px;width:1.00px;height:9.00px;background:rgba(255,255,255,0.45);"></div>
<div class="t" style="left:728.20px;top:581.57px;font-size:5.0px;line-height:5.0px;color:#fff;">Fer</div>
<div class="b" style="left:191.00px;top:381.00px;width:1.00px;height:14.00px;background:rgba(255,255,255,0.35);"></div>
<div class="b" style="left:285.00px;top:381.00px;width:1.00px;height:14.00px;background:rgba(255,255,255,0.35);"></div>
<div class="b" style="left:380.00px;top:381.00px;width:1.00px;height:14.00px;background:rgba(255,255,255,0.35);"></div>
<div class="b" style="left:475.00px;top:381.00px;width:1.00px;height:14.00px;background:rgba(255,255,255,0.35);"></div>
<div class="b" style="left:570.00px;top:381.00px;width:1.00px;height:14.00px;background:rgba(255,255,255,0.35);"></div>
<div class="b" style="left:665.00px;top:381.00px;width:1.00px;height:14.00px;background:rgba(255,255,255,0.35);"></div>
<div class="b" style="left:191.00px;top:580.00px;width:1.00px;height:13.00px;background:rgba(255,255,255,0.35);"></div>
<div class="b" style="left:285.00px;top:580.00px;width:1.00px;height:13.00px;background:rgba(255,255,255,0.35);"></div>
<div class="b" style="left:380.00px;top:580.00px;width:1.00px;height:13.00px;background:rgba(255,255,255,0.35);"></div>
<div class="b" style="left:475.00px;top:580.00px;width:1.00px;height:13.00px;background:rgba(255,255,255,0.35);"></div>
<div class="b" style="left:570.00px;top:580.00px;width:1.00px;height:13.00px;background:rgba(255,255,255,0.35);"></div>
<div class="b" style="left:665.00px;top:580.00px;width:1.00px;height:13.00px;background:rgba(255,255,255,0.35);"></div>
</body></html>
